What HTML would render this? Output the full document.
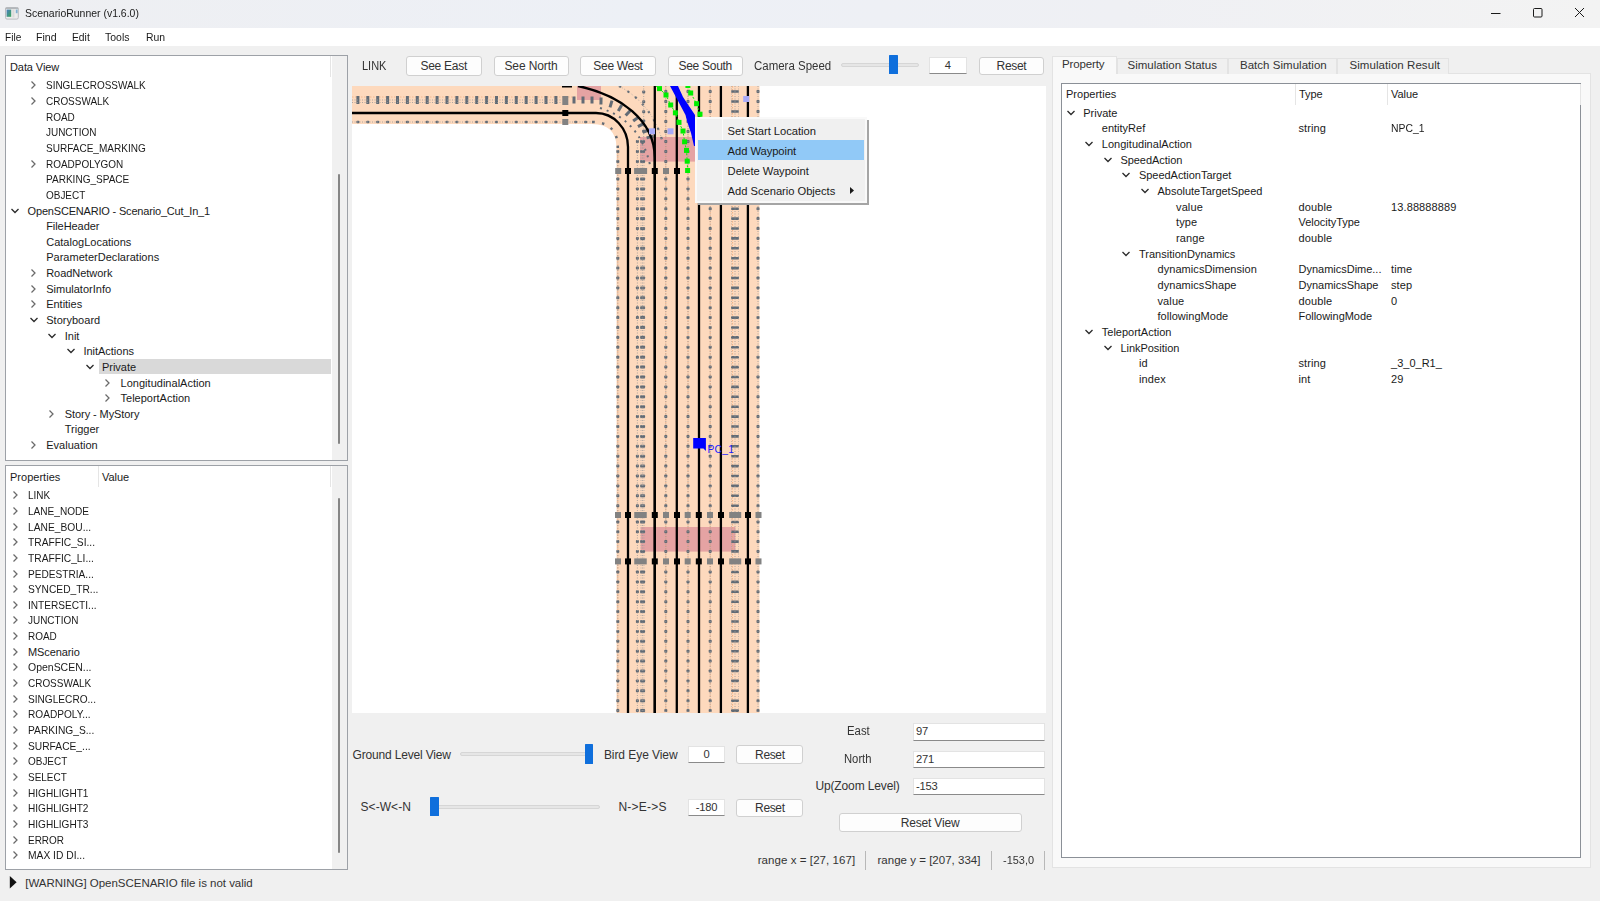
<!DOCTYPE html><html><head><meta charset="utf-8"><style>
html,body{margin:0;padding:0}
body{width:1600px;height:901px;position:relative;overflow:hidden;background:#f0f0f0;font-family:"Liberation Sans",sans-serif;}
.t{position:absolute;white-space:nowrap;line-height:14px;height:14px}
.a{position:absolute}
.b{position:absolute;box-sizing:border-box}
.btn{position:absolute;box-sizing:border-box;background:#fdfdfd;border:1px solid #d0d0d0;border-radius:3px;text-align:center;color:#333;white-space:nowrap}
.inp{position:absolute;box-sizing:border-box;background:#fff;border:1px solid #e3e3e3;border-bottom:1px solid #8a8a8a;color:#333;white-space:nowrap}
</style></head><body>
<div class="b" style="left:0px;top:0px;width:1600px;height:28px;background:linear-gradient(90deg,#eeeff2 0%,#edf0f6 40%,#eff0f4 70%,#f3f3f3 100%)"></div>
<svg class="a" style="left:5px;top:6.5px" width="14" height="13" viewBox="0 0 14 13"><defs><linearGradient id="ig" x1="0" y1="0" x2="1" y2="1"><stop offset="0" stop-color="#4a7fc0"/><stop offset="1" stop-color="#3aa65a"/></linearGradient></defs><rect x="0.5" y="0.5" width="12.8" height="11.6" rx="1.5" fill="#ececec" stroke="#b9bcc0"/><rect x="0.5" y="0.5" width="12.8" height="1.6" fill="#b2b6ba"/><rect x="1.6" y="2.6" width="4.6" height="7.2" fill="url(#ig)"/><rect x="7.4" y="2.6" width="2" height="7.8" fill="#dadada"/><rect x="10.8" y="2.6" width="1.8" height="3.6" fill="#7fb0d0"/></svg>
<div class="t" style="left:25px;top:6.00px;font-size:11.2px;color:#1a1a1a;transform:scaleX(0.9343);transform-origin:0 50%;">ScenarioRunner (v1.6.0)</div>
<svg class="a" style="left:1480px;top:0px" width="120" height="28" viewBox="1480 0 120 28"><path d="M1491 13.5 H1500.5" stroke="#1a1a1a" stroke-width="1"/><rect x="1533.5" y="8.5" width="8.5" height="8.5" rx="1" fill="none" stroke="#1a1a1a" stroke-width="1"/><path d="M1575 8 L1584 17 M1584 8 L1575 17" stroke="#1a1a1a" stroke-width="1"/></svg>
<div class="b" style="left:0px;top:28px;width:1600px;height:18px;background:#ffffff"></div>
<div class="t" style="left:5px;top:30.00px;font-size:11.5px;color:#1a1a1a;transform:scaleX(0.8769);transform-origin:0 50%;">File</div>
<div class="t" style="left:36.25px;top:30.00px;font-size:11.5px;color:#1a1a1a;transform:scaleX(0.9208);transform-origin:0 50%;">Find</div>
<div class="t" style="left:72.25px;top:30.00px;font-size:11.5px;color:#1a1a1a;transform:scaleX(0.8957);transform-origin:0 50%;">Edit</div>
<div class="t" style="left:105px;top:30.00px;font-size:11.5px;color:#1a1a1a;transform:scaleX(0.9103);transform-origin:0 50%;">Tools</div>
<div class="t" style="left:145.6px;top:30.00px;font-size:11.5px;color:#1a1a1a;transform:scaleX(0.9054);transform-origin:0 50%;">Run</div>
<div class="b" style="left:5px;top:55px;width:343px;height:406px;background:#fff;border:1px solid #9da1a7"></div>
<div class="b" style="left:332px;top:56px;width:15px;height:404px;background:#f0f0f0"></div>
<div class="b" style="left:330px;top:56px;width:1px;height:21px;background:#e5e5e5"></div>
<div class="b" style="left:338px;top:174px;width:2px;height:270px;background:#858585;border-radius:1px"></div>
<div class="t" style="left:10px;top:59.50px;font-size:11px;color:#1a1a1a;letter-spacing:-0.084px;">Data View</div>
<div class="b" style="left:98.5px;top:359.09999999999997px;width:232.5px;height:15.2px;background:#d9d9d9"></div>
<svg class="a" style="left:28.700000000000003px;top:80.38px" width="8" height="10" viewBox="0 0 8 10"><path d="M2.5 1.5 L6 5 L2.5 8.5" fill="none" stroke="#6a6a6a" stroke-width="1.25"/></svg>
<div class="t" style="left:46.2px;top:78.38px;font-size:11px;color:#1a1a1a;transform:scaleX(0.9050);transform-origin:0 50%;">SINGLECROSSWALK</div>
<svg class="a" style="left:28.700000000000003px;top:96.02px" width="8" height="10" viewBox="0 0 8 10"><path d="M2.5 1.5 L6 5 L2.5 8.5" fill="none" stroke="#6a6a6a" stroke-width="1.25"/></svg>
<div class="t" style="left:46.2px;top:94.02px;font-size:11px;color:#1a1a1a;transform:scaleX(0.9050);transform-origin:0 50%;">CROSSWALK</div>
<div class="t" style="left:46.2px;top:109.66px;font-size:11px;color:#1a1a1a;transform:scaleX(0.9050);transform-origin:0 50%;">ROAD</div>
<div class="t" style="left:46.2px;top:125.30px;font-size:11px;color:#1a1a1a;transform:scaleX(0.9050);transform-origin:0 50%;">JUNCTION</div>
<div class="t" style="left:46.2px;top:140.94px;font-size:11px;color:#1a1a1a;transform:scaleX(0.9114);transform-origin:0 50%;">SURFACE_MARKING</div>
<svg class="a" style="left:28.700000000000003px;top:158.57999999999998px" width="8" height="10" viewBox="0 0 8 10"><path d="M2.5 1.5 L6 5 L2.5 8.5" fill="none" stroke="#6a6a6a" stroke-width="1.25"/></svg>
<div class="t" style="left:46.2px;top:156.58px;font-size:11px;color:#1a1a1a;transform:scaleX(0.9050);transform-origin:0 50%;">ROADPOLYGON</div>
<div class="t" style="left:46.2px;top:172.22px;font-size:11px;color:#1a1a1a;transform:scaleX(0.9126);transform-origin:0 50%;">PARKING_SPACE</div>
<div class="t" style="left:46.2px;top:187.86px;font-size:11px;color:#1a1a1a;transform:scaleX(0.9050);transform-origin:0 50%;">OBJECT</div>
<svg class="a" style="left:10.100000000000001px;top:206.5px" width="10" height="8" viewBox="0 0 10 8"><path d="M1.5 2 L5 5.5 L8.5 2" fill="none" stroke="#2a2a2a" stroke-width="1.3"/></svg>
<div class="t" style="left:27.6px;top:203.50px;font-size:11px;color:#1a1a1a;letter-spacing:-0.185px;">OpenSCENARIO - Scenario_Cut_In_1</div>
<div class="t" style="left:46.2px;top:219.14px;font-size:11px;color:#1a1a1a;letter-spacing:-0.061px;">FileHeader</div>
<div class="t" style="left:46.2px;top:234.78px;font-size:11px;color:#1a1a1a;letter-spacing:0.005px;">CatalogLocations</div>
<div class="t" style="left:46.2px;top:250.42px;font-size:11px;color:#1a1a1a;letter-spacing:0.023px;">ParameterDeclarations</div>
<svg class="a" style="left:28.700000000000003px;top:268.06px" width="8" height="10" viewBox="0 0 8 10"><path d="M2.5 1.5 L6 5 L2.5 8.5" fill="none" stroke="#6a6a6a" stroke-width="1.25"/></svg>
<div class="t" style="left:46.2px;top:266.06px;font-size:11px;color:#1a1a1a;letter-spacing:-0.045px;">RoadNetwork</div>
<svg class="a" style="left:28.700000000000003px;top:283.7px" width="8" height="10" viewBox="0 0 8 10"><path d="M2.5 1.5 L6 5 L2.5 8.5" fill="none" stroke="#6a6a6a" stroke-width="1.25"/></svg>
<div class="t" style="left:46.2px;top:281.70px;font-size:11px;color:#1a1a1a;letter-spacing:0.008px;">SimulatorInfo</div>
<svg class="a" style="left:28.700000000000003px;top:299.34000000000003px" width="8" height="10" viewBox="0 0 8 10"><path d="M2.5 1.5 L6 5 L2.5 8.5" fill="none" stroke="#6a6a6a" stroke-width="1.25"/></svg>
<div class="t" style="left:46.2px;top:297.34px;font-size:11px;color:#1a1a1a;letter-spacing:-0.015px;">Entities</div>
<svg class="a" style="left:28.700000000000003px;top:315.98px" width="10" height="8" viewBox="0 0 10 8"><path d="M1.5 2 L5 5.5 L8.5 2" fill="none" stroke="#2a2a2a" stroke-width="1.3"/></svg>
<div class="t" style="left:46.2px;top:312.98px;font-size:11px;color:#1a1a1a;letter-spacing:0.023px;">Storyboard</div>
<svg class="a" style="left:47.30000000000001px;top:331.62px" width="10" height="8" viewBox="0 0 10 8"><path d="M1.5 2 L5 5.5 L8.5 2" fill="none" stroke="#2a2a2a" stroke-width="1.3"/></svg>
<div class="t" style="left:64.80000000000001px;top:328.62px;font-size:11px;color:#1a1a1a;letter-spacing:-0.014px;">Init</div>
<svg class="a" style="left:65.9px;top:347.26px" width="10" height="8" viewBox="0 0 10 8"><path d="M1.5 2 L5 5.5 L8.5 2" fill="none" stroke="#2a2a2a" stroke-width="1.3"/></svg>
<div class="t" style="left:83.4px;top:344.26px;font-size:11px;color:#1a1a1a;letter-spacing:-0.016px;">InitActions</div>
<svg class="a" style="left:84.5px;top:362.9px" width="10" height="8" viewBox="0 0 10 8"><path d="M1.5 2 L5 5.5 L8.5 2" fill="none" stroke="#2a2a2a" stroke-width="1.3"/></svg>
<div class="t" style="left:102.0px;top:359.90px;font-size:11px;color:#1a1a1a;letter-spacing:-0.023px;">Private</div>
<svg class="a" style="left:103.1px;top:377.54px" width="8" height="10" viewBox="0 0 8 10"><path d="M2.5 1.5 L6 5 L2.5 8.5" fill="none" stroke="#6a6a6a" stroke-width="1.25"/></svg>
<div class="t" style="left:120.6px;top:375.54px;font-size:11px;color:#1a1a1a;letter-spacing:0.014px;">LongitudinalAction</div>
<svg class="a" style="left:103.1px;top:393.18px" width="8" height="10" viewBox="0 0 8 10"><path d="M2.5 1.5 L6 5 L2.5 8.5" fill="none" stroke="#6a6a6a" stroke-width="1.25"/></svg>
<div class="t" style="left:120.6px;top:391.18px;font-size:11px;color:#1a1a1a;letter-spacing:-0.014px;">TeleportAction</div>
<svg class="a" style="left:47.30000000000001px;top:408.82px" width="8" height="10" viewBox="0 0 8 10"><path d="M2.5 1.5 L6 5 L2.5 8.5" fill="none" stroke="#6a6a6a" stroke-width="1.25"/></svg>
<div class="t" style="left:64.80000000000001px;top:406.82px;font-size:11px;color:#1a1a1a;letter-spacing:-0.082px;">Story - MyStory</div>
<div class="t" style="left:64.80000000000001px;top:422.46px;font-size:11px;color:#1a1a1a;letter-spacing:-0.011px;">Trigger</div>
<svg class="a" style="left:28.700000000000003px;top:440.1px" width="8" height="10" viewBox="0 0 8 10"><path d="M2.5 1.5 L6 5 L2.5 8.5" fill="none" stroke="#6a6a6a" stroke-width="1.25"/></svg>
<div class="t" style="left:46.2px;top:438.10px;font-size:11px;color:#1a1a1a;letter-spacing:0.018px;">Evaluation</div>
<div class="b" style="left:5px;top:465px;width:343px;height:405px;background:#fff;border:1px solid #9da1a7"></div>
<div class="b" style="left:332px;top:466px;width:15px;height:403px;background:#f0f0f0"></div>
<div class="b" style="left:98px;top:466px;width:1px;height:21px;background:#e5e5e5"></div>
<div class="b" style="left:330px;top:466px;width:1px;height:21px;background:#e5e5e5"></div>
<div class="b" style="left:338px;top:498px;width:2px;height:355px;background:#858585;border-radius:1px"></div>
<div class="t" style="left:10px;top:470.00px;font-size:11px;color:#1a1a1a;letter-spacing:0.016px;">Properties</div>
<div class="t" style="left:102px;top:470.00px;font-size:11px;color:#1a1a1a;letter-spacing:-0.056px;">Value</div>
<svg class="a" style="left:10.5px;top:490.2px" width="8" height="10" viewBox="0 0 8 10"><path d="M2.5 1.5 L6 5 L2.5 8.5" fill="none" stroke="#6a6a6a" stroke-width="1.25"/></svg>
<div class="t" style="left:28px;top:488.20px;font-size:11px;color:#1a1a1a;transform:scaleX(0.9050);transform-origin:0 50%;">LINK</div>
<svg class="a" style="left:10.5px;top:505.86px" width="8" height="10" viewBox="0 0 8 10"><path d="M2.5 1.5 L6 5 L2.5 8.5" fill="none" stroke="#6a6a6a" stroke-width="1.25"/></svg>
<div class="t" style="left:28px;top:503.86px;font-size:11px;color:#1a1a1a;transform:scaleX(0.9156);transform-origin:0 50%;">LANE_NODE</div>
<svg class="a" style="left:10.5px;top:521.52px" width="8" height="10" viewBox="0 0 8 10"><path d="M2.5 1.5 L6 5 L2.5 8.5" fill="none" stroke="#6a6a6a" stroke-width="1.25"/></svg>
<div class="t" style="left:28px;top:519.52px;font-size:11px;color:#1a1a1a;transform:scaleX(0.9309);transform-origin:0 50%;">LANE_BOU...</div>
<svg class="a" style="left:10.5px;top:537.18px" width="8" height="10" viewBox="0 0 8 10"><path d="M2.5 1.5 L6 5 L2.5 8.5" fill="none" stroke="#6a6a6a" stroke-width="1.25"/></svg>
<div class="t" style="left:28px;top:535.18px;font-size:11px;color:#1a1a1a;transform:scaleX(0.9294);transform-origin:0 50%;">TRAFFIC_SI...</div>
<svg class="a" style="left:10.5px;top:552.84px" width="8" height="10" viewBox="0 0 8 10"><path d="M2.5 1.5 L6 5 L2.5 8.5" fill="none" stroke="#6a6a6a" stroke-width="1.25"/></svg>
<div class="t" style="left:28px;top:550.84px;font-size:11px;color:#1a1a1a;transform:scaleX(0.9298);transform-origin:0 50%;">TRAFFIC_LI...</div>
<svg class="a" style="left:10.5px;top:568.5px" width="8" height="10" viewBox="0 0 8 10"><path d="M2.5 1.5 L6 5 L2.5 8.5" fill="none" stroke="#6a6a6a" stroke-width="1.25"/></svg>
<div class="t" style="left:28px;top:566.50px;font-size:11px;color:#1a1a1a;transform:scaleX(0.9197);transform-origin:0 50%;">PEDESTRIA...</div>
<svg class="a" style="left:10.5px;top:584.16px" width="8" height="10" viewBox="0 0 8 10"><path d="M2.5 1.5 L6 5 L2.5 8.5" fill="none" stroke="#6a6a6a" stroke-width="1.25"/></svg>
<div class="t" style="left:28px;top:582.16px;font-size:11px;color:#1a1a1a;transform:scaleX(0.9282);transform-origin:0 50%;">SYNCED_TR...</div>
<svg class="a" style="left:10.5px;top:599.8199999999999px" width="8" height="10" viewBox="0 0 8 10"><path d="M2.5 1.5 L6 5 L2.5 8.5" fill="none" stroke="#6a6a6a" stroke-width="1.25"/></svg>
<div class="t" style="left:28px;top:597.82px;font-size:11px;color:#1a1a1a;transform:scaleX(0.9191);transform-origin:0 50%;">INTERSECTI...</div>
<svg class="a" style="left:10.5px;top:615.48px" width="8" height="10" viewBox="0 0 8 10"><path d="M2.5 1.5 L6 5 L2.5 8.5" fill="none" stroke="#6a6a6a" stroke-width="1.25"/></svg>
<div class="t" style="left:28px;top:613.48px;font-size:11px;color:#1a1a1a;transform:scaleX(0.9050);transform-origin:0 50%;">JUNCTION</div>
<svg class="a" style="left:10.5px;top:631.14px" width="8" height="10" viewBox="0 0 8 10"><path d="M2.5 1.5 L6 5 L2.5 8.5" fill="none" stroke="#6a6a6a" stroke-width="1.25"/></svg>
<div class="t" style="left:28px;top:629.14px;font-size:11px;color:#1a1a1a;transform:scaleX(0.9050);transform-origin:0 50%;">ROAD</div>
<svg class="a" style="left:10.5px;top:646.8px" width="8" height="10" viewBox="0 0 8 10"><path d="M2.5 1.5 L6 5 L2.5 8.5" fill="none" stroke="#6a6a6a" stroke-width="1.25"/></svg>
<div class="t" style="left:28px;top:644.80px;font-size:11px;color:#1a1a1a;letter-spacing:-0.094px;">MScenario</div>
<svg class="a" style="left:10.5px;top:662.46px" width="8" height="10" viewBox="0 0 8 10"><path d="M2.5 1.5 L6 5 L2.5 8.5" fill="none" stroke="#6a6a6a" stroke-width="1.25"/></svg>
<div class="t" style="left:28px;top:660.46px;font-size:11px;color:#1a1a1a;transform:scaleX(0.9525);transform-origin:0 50%;">OpenSCEN...</div>
<svg class="a" style="left:10.5px;top:678.12px" width="8" height="10" viewBox="0 0 8 10"><path d="M2.5 1.5 L6 5 L2.5 8.5" fill="none" stroke="#6a6a6a" stroke-width="1.25"/></svg>
<div class="t" style="left:28px;top:676.12px;font-size:11px;color:#1a1a1a;transform:scaleX(0.9050);transform-origin:0 50%;">CROSSWALK</div>
<svg class="a" style="left:10.5px;top:693.78px" width="8" height="10" viewBox="0 0 8 10"><path d="M2.5 1.5 L6 5 L2.5 8.5" fill="none" stroke="#6a6a6a" stroke-width="1.25"/></svg>
<div class="t" style="left:28px;top:691.78px;font-size:11px;color:#1a1a1a;transform:scaleX(0.9193);transform-origin:0 50%;">SINGLECRO...</div>
<svg class="a" style="left:10.5px;top:709.44px" width="8" height="10" viewBox="0 0 8 10"><path d="M2.5 1.5 L6 5 L2.5 8.5" fill="none" stroke="#6a6a6a" stroke-width="1.25"/></svg>
<div class="t" style="left:28px;top:707.44px;font-size:11px;color:#1a1a1a;transform:scaleX(0.9200);transform-origin:0 50%;">ROADPOLY...</div>
<svg class="a" style="left:10.5px;top:725.1px" width="8" height="10" viewBox="0 0 8 10"><path d="M2.5 1.5 L6 5 L2.5 8.5" fill="none" stroke="#6a6a6a" stroke-width="1.25"/></svg>
<div class="t" style="left:28px;top:723.10px;font-size:11px;color:#1a1a1a;transform:scaleX(0.9294);transform-origin:0 50%;">PARKING_S...</div>
<svg class="a" style="left:10.5px;top:740.76px" width="8" height="10" viewBox="0 0 8 10"><path d="M2.5 1.5 L6 5 L2.5 8.5" fill="none" stroke="#6a6a6a" stroke-width="1.25"/></svg>
<div class="t" style="left:28px;top:738.76px;font-size:11px;color:#1a1a1a;transform:scaleX(0.9309);transform-origin:0 50%;">SURFACE_...</div>
<svg class="a" style="left:10.5px;top:756.4200000000001px" width="8" height="10" viewBox="0 0 8 10"><path d="M2.5 1.5 L6 5 L2.5 8.5" fill="none" stroke="#6a6a6a" stroke-width="1.25"/></svg>
<div class="t" style="left:28px;top:754.42px;font-size:11px;color:#1a1a1a;transform:scaleX(0.9050);transform-origin:0 50%;">OBJECT</div>
<svg class="a" style="left:10.5px;top:772.0799999999999px" width="8" height="10" viewBox="0 0 8 10"><path d="M2.5 1.5 L6 5 L2.5 8.5" fill="none" stroke="#6a6a6a" stroke-width="1.25"/></svg>
<div class="t" style="left:28px;top:770.08px;font-size:11px;color:#1a1a1a;transform:scaleX(0.9050);transform-origin:0 50%;">SELECT</div>
<svg class="a" style="left:10.5px;top:787.74px" width="8" height="10" viewBox="0 0 8 10"><path d="M2.5 1.5 L6 5 L2.5 8.5" fill="none" stroke="#6a6a6a" stroke-width="1.25"/></svg>
<div class="t" style="left:28px;top:785.74px;font-size:11px;color:#1a1a1a;transform:scaleX(0.9157);transform-origin:0 50%;">HIGHLIGHT1</div>
<svg class="a" style="left:10.5px;top:803.4px" width="8" height="10" viewBox="0 0 8 10"><path d="M2.5 1.5 L6 5 L2.5 8.5" fill="none" stroke="#6a6a6a" stroke-width="1.25"/></svg>
<div class="t" style="left:28px;top:801.40px;font-size:11px;color:#1a1a1a;transform:scaleX(0.9157);transform-origin:0 50%;">HIGHLIGHT2</div>
<svg class="a" style="left:10.5px;top:819.06px" width="8" height="10" viewBox="0 0 8 10"><path d="M2.5 1.5 L6 5 L2.5 8.5" fill="none" stroke="#6a6a6a" stroke-width="1.25"/></svg>
<div class="t" style="left:28px;top:817.06px;font-size:11px;color:#1a1a1a;transform:scaleX(0.9157);transform-origin:0 50%;">HIGHLIGHT3</div>
<svg class="a" style="left:10.5px;top:834.72px" width="8" height="10" viewBox="0 0 8 10"><path d="M2.5 1.5 L6 5 L2.5 8.5" fill="none" stroke="#6a6a6a" stroke-width="1.25"/></svg>
<div class="t" style="left:28px;top:832.72px;font-size:11px;color:#1a1a1a;transform:scaleX(0.9050);transform-origin:0 50%;">ERROR</div>
<svg class="a" style="left:10.5px;top:850.38px" width="8" height="10" viewBox="0 0 8 10"><path d="M2.5 1.5 L6 5 L2.5 8.5" fill="none" stroke="#6a6a6a" stroke-width="1.25"/></svg>
<div class="t" style="left:28px;top:848.38px;font-size:11px;color:#1a1a1a;transform:scaleX(0.9338);transform-origin:0 50%;">MAX ID DI...</div>
<svg class="a" style="left:9px;top:875.5px" width="10" height="13" viewBox="0 0 10 13"><path d="M0.8 0 L7.6 6.3 L0.8 12.6 Z" fill="#111"/></svg>
<div class="t" style="left:25.3px;top:876.00px;font-size:11.5px;color:#333;letter-spacing:-0.025px;">[WARNING] OpenSCENARIO file is not valid</div>
<div class="t" style="left:361.5px;top:58.50px;font-size:12px;color:#333;transform:scaleX(0.9146);transform-origin:0 50%;">LINK</div>
<div class="btn" style="left:406px;top:56px;width:75.5px;height:19.5px;font-size:12px;line-height:18.7px;letter-spacing:-0.250px;">See East</div>
<div class="btn" style="left:493.5px;top:56px;width:75.0px;height:19.5px;font-size:12px;line-height:18.7px;letter-spacing:-0.114px;">See North</div>
<div class="btn" style="left:580px;top:56px;width:76px;height:19.5px;font-size:12px;line-height:18.7px;letter-spacing:-0.315px;">See West</div>
<div class="btn" style="left:667.5px;top:56px;width:75.5px;height:19.5px;font-size:12px;line-height:18.7px;letter-spacing:-0.283px;">See South</div>
<div class="t" style="left:753.6px;top:58.50px;font-size:12px;color:#333;transform:scaleX(0.9565);transform-origin:0 50%;">Camera Speed</div>
<div class="b" style="left:841px;top:62.5px;width:77.5px;height:4px;background:#e6e6e6;border:1px solid #d6d6d6;border-radius:2px"></div>
<div class="b" style="left:889px;top:55.3px;width:8.6px;height:19px;background:#0f6fdc;border-radius:0.5px"></div>
<div class="inp" style="left:929px;top:57.2px;width:37.700000000000045px;height:17.200000000000003px;font-size:11.2px;line-height:14.200000000000003px;text-align:center;letter-spacing:-0.2px;">4</div>
<div class="btn" style="left:978.5px;top:56.7px;width:65.79999999999995px;height:18.5px;font-size:12px;line-height:17.7px;letter-spacing:-0.350px;">Reset</div>
<div class="b" style="left:352px;top:86px;width:694px;height:627px;background:#ffffff"></div>
<svg style="position:absolute;left:352px;top:86px" width="694" height="627" viewBox="352 86 694 627">
<defs><clipPath id="mc"><rect x="352" y="86" width="694" height="627"/></clipPath></defs><g clip-path="url(#mc)">
<path d="M352 86 H759.5 V713 H616.5 V148 Q616.5 124 592 124 H352 Z" fill="#fdd9bd"/>
<rect x="577" y="86" width="24" height="14" fill="#e5a3a3"/>
<rect x="640" y="137" width="55" height="24.6" fill="#e5a3a3"/>
<rect x="640.6" y="527" width="94.8" height="24.6" fill="#e5a3a3"/>
<line x1="617.8" y1="150" x2="617.8" y2="713" stroke="#e8a070" stroke-width="0.8" stroke-dasharray="1.5 1.5" opacity="0.9"/>
<line x1="665.8" y1="86" x2="665.8" y2="713" stroke="#e8a070" stroke-width="0.8" stroke-dasharray="1.5 1.5" opacity="0.9"/>
<line x1="688" y1="86" x2="688" y2="713" stroke="#e8a070" stroke-width="0.8" stroke-dasharray="1.5 1.5" opacity="0.9"/>
<line x1="710.2" y1="86" x2="710.2" y2="713" stroke="#e8a070" stroke-width="0.8" stroke-dasharray="1.5 1.5" opacity="0.9"/>
<line x1="732.4" y1="86" x2="732.4" y2="713" stroke="#e8a070" stroke-width="0.8" stroke-dasharray="1.5 1.5" opacity="0.9"/>
<line x1="352" y1="97" x2="575" y2="97" stroke="#e8a070" stroke-width="0.7" stroke-dasharray="1.5 1.5" opacity="0.8"/>
<rect x="616.30" y="150.00" width="3" height="3" rx="0.8" fill="#626b75"/>
<rect x="616.30" y="160.00" width="3" height="3" rx="0.8" fill="#626b75"/>
<rect x="616.30" y="177.50" width="3" height="3" rx="0.8" fill="#626b75"/>
<rect x="616.30" y="187.40" width="3" height="3" rx="0.8" fill="#626b75"/>
<rect x="616.30" y="197.30" width="3" height="3" rx="0.8" fill="#626b75"/>
<rect x="616.30" y="207.20" width="3" height="3" rx="0.8" fill="#626b75"/>
<rect x="616.30" y="217.10" width="3" height="3" rx="0.8" fill="#626b75"/>
<rect x="616.30" y="227.00" width="3" height="3" rx="0.8" fill="#626b75"/>
<rect x="616.30" y="236.90" width="3" height="3" rx="0.8" fill="#626b75"/>
<rect x="616.30" y="246.80" width="3" height="3" rx="0.8" fill="#626b75"/>
<rect x="616.30" y="256.70" width="3" height="3" rx="0.8" fill="#626b75"/>
<rect x="616.30" y="266.60" width="3" height="3" rx="0.8" fill="#626b75"/>
<rect x="616.30" y="276.50" width="3" height="3" rx="0.8" fill="#626b75"/>
<rect x="616.30" y="286.40" width="3" height="3" rx="0.8" fill="#626b75"/>
<rect x="616.30" y="296.30" width="3" height="3" rx="0.8" fill="#626b75"/>
<rect x="616.30" y="306.20" width="3" height="3" rx="0.8" fill="#626b75"/>
<rect x="616.30" y="316.10" width="3" height="3" rx="0.8" fill="#626b75"/>
<rect x="616.30" y="326.00" width="3" height="3" rx="0.8" fill="#626b75"/>
<rect x="616.30" y="335.90" width="3" height="3" rx="0.8" fill="#626b75"/>
<rect x="616.30" y="345.80" width="3" height="3" rx="0.8" fill="#626b75"/>
<rect x="616.30" y="355.70" width="3" height="3" rx="0.8" fill="#626b75"/>
<rect x="616.30" y="365.60" width="3" height="3" rx="0.8" fill="#626b75"/>
<rect x="616.30" y="375.50" width="3" height="3" rx="0.8" fill="#626b75"/>
<rect x="616.30" y="385.40" width="3" height="3" rx="0.8" fill="#626b75"/>
<rect x="616.30" y="395.30" width="3" height="3" rx="0.8" fill="#626b75"/>
<rect x="616.30" y="405.20" width="3" height="3" rx="0.8" fill="#626b75"/>
<rect x="616.30" y="415.10" width="3" height="3" rx="0.8" fill="#626b75"/>
<rect x="616.30" y="425.00" width="3" height="3" rx="0.8" fill="#626b75"/>
<rect x="616.30" y="434.90" width="3" height="3" rx="0.8" fill="#626b75"/>
<rect x="616.30" y="444.80" width="3" height="3" rx="0.8" fill="#626b75"/>
<rect x="616.30" y="454.70" width="3" height="3" rx="0.8" fill="#626b75"/>
<rect x="616.30" y="464.60" width="3" height="3" rx="0.8" fill="#626b75"/>
<rect x="616.30" y="474.50" width="3" height="3" rx="0.8" fill="#626b75"/>
<rect x="616.30" y="484.40" width="3" height="3" rx="0.8" fill="#626b75"/>
<rect x="616.30" y="494.30" width="3" height="3" rx="0.8" fill="#626b75"/>
<rect x="616.30" y="504.20" width="3" height="3" rx="0.8" fill="#626b75"/>
<rect x="616.30" y="520.50" width="3" height="3" rx="0.8" fill="#626b75"/>
<rect x="616.30" y="530.30" width="3" height="3" rx="0.8" fill="#626b75"/>
<rect x="616.30" y="540.10" width="3" height="3" rx="0.8" fill="#626b75"/>
<rect x="616.30" y="549.90" width="3" height="3" rx="0.8" fill="#626b75"/>
<rect x="616.30" y="570.50" width="3" height="3" rx="0.8" fill="#626b75"/>
<rect x="616.30" y="580.40" width="3" height="3" rx="0.8" fill="#626b75"/>
<rect x="616.30" y="590.30" width="3" height="3" rx="0.8" fill="#626b75"/>
<rect x="616.30" y="600.20" width="3" height="3" rx="0.8" fill="#626b75"/>
<rect x="616.30" y="610.10" width="3" height="3" rx="0.8" fill="#626b75"/>
<rect x="616.30" y="620.00" width="3" height="3" rx="0.8" fill="#626b75"/>
<rect x="616.30" y="629.90" width="3" height="3" rx="0.8" fill="#626b75"/>
<rect x="616.30" y="639.80" width="3" height="3" rx="0.8" fill="#626b75"/>
<rect x="616.30" y="649.70" width="3" height="3" rx="0.8" fill="#626b75"/>
<rect x="616.30" y="659.60" width="3" height="3" rx="0.8" fill="#626b75"/>
<rect x="616.30" y="669.50" width="3" height="3" rx="0.8" fill="#626b75"/>
<rect x="616.30" y="679.40" width="3" height="3" rx="0.8" fill="#626b75"/>
<rect x="616.30" y="689.30" width="3" height="3" rx="0.8" fill="#626b75"/>
<rect x="616.30" y="699.20" width="3" height="3" rx="0.8" fill="#626b75"/>
<rect x="616.30" y="709.10" width="3" height="3" rx="0.8" fill="#626b75"/>
<line x1="617.8" y1="150" x2="617.8" y2="713" stroke="#9a9a9a" stroke-width="0.8" stroke-dasharray="1 1.5"/>
<rect x="664.30" y="90.00" width="3" height="3" rx="0.8" fill="#626b75"/>
<rect x="664.30" y="100.00" width="3" height="3" rx="0.8" fill="#626b75"/>
<rect x="664.30" y="110.00" width="3" height="3" rx="0.8" fill="#626b75"/>
<rect x="664.30" y="120.00" width="3" height="3" rx="0.8" fill="#626b75"/>
<rect x="664.30" y="130.00" width="3" height="3" rx="0.8" fill="#626b75"/>
<rect x="664.30" y="140.00" width="3" height="3" rx="0.8" fill="#626b75"/>
<rect x="664.30" y="150.00" width="3" height="3" rx="0.8" fill="#626b75"/>
<rect x="664.30" y="160.00" width="3" height="3" rx="0.8" fill="#626b75"/>
<rect x="664.30" y="177.50" width="3" height="3" rx="0.8" fill="#626b75"/>
<rect x="664.30" y="187.40" width="3" height="3" rx="0.8" fill="#626b75"/>
<rect x="664.30" y="197.30" width="3" height="3" rx="0.8" fill="#626b75"/>
<rect x="664.30" y="207.20" width="3" height="3" rx="0.8" fill="#626b75"/>
<rect x="664.30" y="217.10" width="3" height="3" rx="0.8" fill="#626b75"/>
<rect x="664.30" y="227.00" width="3" height="3" rx="0.8" fill="#626b75"/>
<rect x="664.30" y="236.90" width="3" height="3" rx="0.8" fill="#626b75"/>
<rect x="664.30" y="246.80" width="3" height="3" rx="0.8" fill="#626b75"/>
<rect x="664.30" y="256.70" width="3" height="3" rx="0.8" fill="#626b75"/>
<rect x="664.30" y="266.60" width="3" height="3" rx="0.8" fill="#626b75"/>
<rect x="664.30" y="276.50" width="3" height="3" rx="0.8" fill="#626b75"/>
<rect x="664.30" y="286.40" width="3" height="3" rx="0.8" fill="#626b75"/>
<rect x="664.30" y="296.30" width="3" height="3" rx="0.8" fill="#626b75"/>
<rect x="664.30" y="306.20" width="3" height="3" rx="0.8" fill="#626b75"/>
<rect x="664.30" y="316.10" width="3" height="3" rx="0.8" fill="#626b75"/>
<rect x="664.30" y="326.00" width="3" height="3" rx="0.8" fill="#626b75"/>
<rect x="664.30" y="335.90" width="3" height="3" rx="0.8" fill="#626b75"/>
<rect x="664.30" y="345.80" width="3" height="3" rx="0.8" fill="#626b75"/>
<rect x="664.30" y="355.70" width="3" height="3" rx="0.8" fill="#626b75"/>
<rect x="664.30" y="365.60" width="3" height="3" rx="0.8" fill="#626b75"/>
<rect x="664.30" y="375.50" width="3" height="3" rx="0.8" fill="#626b75"/>
<rect x="664.30" y="385.40" width="3" height="3" rx="0.8" fill="#626b75"/>
<rect x="664.30" y="395.30" width="3" height="3" rx="0.8" fill="#626b75"/>
<rect x="664.30" y="405.20" width="3" height="3" rx="0.8" fill="#626b75"/>
<rect x="664.30" y="415.10" width="3" height="3" rx="0.8" fill="#626b75"/>
<rect x="664.30" y="425.00" width="3" height="3" rx="0.8" fill="#626b75"/>
<rect x="664.30" y="434.90" width="3" height="3" rx="0.8" fill="#626b75"/>
<rect x="664.30" y="444.80" width="3" height="3" rx="0.8" fill="#626b75"/>
<rect x="664.30" y="454.70" width="3" height="3" rx="0.8" fill="#626b75"/>
<rect x="664.30" y="464.60" width="3" height="3" rx="0.8" fill="#626b75"/>
<rect x="664.30" y="474.50" width="3" height="3" rx="0.8" fill="#626b75"/>
<rect x="664.30" y="484.40" width="3" height="3" rx="0.8" fill="#626b75"/>
<rect x="664.30" y="494.30" width="3" height="3" rx="0.8" fill="#626b75"/>
<rect x="664.30" y="504.20" width="3" height="3" rx="0.8" fill="#626b75"/>
<rect x="664.30" y="520.50" width="3" height="3" rx="0.8" fill="#626b75"/>
<rect x="664.30" y="530.30" width="3" height="3" rx="0.8" fill="#626b75"/>
<rect x="664.30" y="540.10" width="3" height="3" rx="0.8" fill="#626b75"/>
<rect x="664.30" y="549.90" width="3" height="3" rx="0.8" fill="#626b75"/>
<rect x="664.30" y="570.50" width="3" height="3" rx="0.8" fill="#626b75"/>
<rect x="664.30" y="580.40" width="3" height="3" rx="0.8" fill="#626b75"/>
<rect x="664.30" y="590.30" width="3" height="3" rx="0.8" fill="#626b75"/>
<rect x="664.30" y="600.20" width="3" height="3" rx="0.8" fill="#626b75"/>
<rect x="664.30" y="610.10" width="3" height="3" rx="0.8" fill="#626b75"/>
<rect x="664.30" y="620.00" width="3" height="3" rx="0.8" fill="#626b75"/>
<rect x="664.30" y="629.90" width="3" height="3" rx="0.8" fill="#626b75"/>
<rect x="664.30" y="639.80" width="3" height="3" rx="0.8" fill="#626b75"/>
<rect x="664.30" y="649.70" width="3" height="3" rx="0.8" fill="#626b75"/>
<rect x="664.30" y="659.60" width="3" height="3" rx="0.8" fill="#626b75"/>
<rect x="664.30" y="669.50" width="3" height="3" rx="0.8" fill="#626b75"/>
<rect x="664.30" y="679.40" width="3" height="3" rx="0.8" fill="#626b75"/>
<rect x="664.30" y="689.30" width="3" height="3" rx="0.8" fill="#626b75"/>
<rect x="664.30" y="699.20" width="3" height="3" rx="0.8" fill="#626b75"/>
<rect x="664.30" y="709.10" width="3" height="3" rx="0.8" fill="#626b75"/>
<line x1="665.8" y1="86" x2="665.8" y2="713" stroke="#9a9a9a" stroke-width="0.8" stroke-dasharray="1 1.5"/>
<rect x="686.50" y="90.00" width="3" height="3" rx="0.8" fill="#626b75"/>
<rect x="686.50" y="100.00" width="3" height="3" rx="0.8" fill="#626b75"/>
<rect x="686.50" y="110.00" width="3" height="3" rx="0.8" fill="#626b75"/>
<rect x="686.50" y="120.00" width="3" height="3" rx="0.8" fill="#626b75"/>
<rect x="686.50" y="130.00" width="3" height="3" rx="0.8" fill="#626b75"/>
<rect x="686.50" y="140.00" width="3" height="3" rx="0.8" fill="#626b75"/>
<rect x="686.50" y="150.00" width="3" height="3" rx="0.8" fill="#626b75"/>
<rect x="686.50" y="160.00" width="3" height="3" rx="0.8" fill="#626b75"/>
<rect x="686.50" y="177.50" width="3" height="3" rx="0.8" fill="#626b75"/>
<rect x="686.50" y="187.40" width="3" height="3" rx="0.8" fill="#626b75"/>
<rect x="686.50" y="197.30" width="3" height="3" rx="0.8" fill="#626b75"/>
<rect x="686.50" y="207.20" width="3" height="3" rx="0.8" fill="#626b75"/>
<rect x="686.50" y="217.10" width="3" height="3" rx="0.8" fill="#626b75"/>
<rect x="686.50" y="227.00" width="3" height="3" rx="0.8" fill="#626b75"/>
<rect x="686.50" y="236.90" width="3" height="3" rx="0.8" fill="#626b75"/>
<rect x="686.50" y="246.80" width="3" height="3" rx="0.8" fill="#626b75"/>
<rect x="686.50" y="256.70" width="3" height="3" rx="0.8" fill="#626b75"/>
<rect x="686.50" y="266.60" width="3" height="3" rx="0.8" fill="#626b75"/>
<rect x="686.50" y="276.50" width="3" height="3" rx="0.8" fill="#626b75"/>
<rect x="686.50" y="286.40" width="3" height="3" rx="0.8" fill="#626b75"/>
<rect x="686.50" y="296.30" width="3" height="3" rx="0.8" fill="#626b75"/>
<rect x="686.50" y="306.20" width="3" height="3" rx="0.8" fill="#626b75"/>
<rect x="686.50" y="316.10" width="3" height="3" rx="0.8" fill="#626b75"/>
<rect x="686.50" y="326.00" width="3" height="3" rx="0.8" fill="#626b75"/>
<rect x="686.50" y="335.90" width="3" height="3" rx="0.8" fill="#626b75"/>
<rect x="686.50" y="345.80" width="3" height="3" rx="0.8" fill="#626b75"/>
<rect x="686.50" y="355.70" width="3" height="3" rx="0.8" fill="#626b75"/>
<rect x="686.50" y="365.60" width="3" height="3" rx="0.8" fill="#626b75"/>
<rect x="686.50" y="375.50" width="3" height="3" rx="0.8" fill="#626b75"/>
<rect x="686.50" y="385.40" width="3" height="3" rx="0.8" fill="#626b75"/>
<rect x="686.50" y="395.30" width="3" height="3" rx="0.8" fill="#626b75"/>
<rect x="686.50" y="405.20" width="3" height="3" rx="0.8" fill="#626b75"/>
<rect x="686.50" y="415.10" width="3" height="3" rx="0.8" fill="#626b75"/>
<rect x="686.50" y="425.00" width="3" height="3" rx="0.8" fill="#626b75"/>
<rect x="686.50" y="434.90" width="3" height="3" rx="0.8" fill="#626b75"/>
<rect x="686.50" y="444.80" width="3" height="3" rx="0.8" fill="#626b75"/>
<rect x="686.50" y="454.70" width="3" height="3" rx="0.8" fill="#626b75"/>
<rect x="686.50" y="464.60" width="3" height="3" rx="0.8" fill="#626b75"/>
<rect x="686.50" y="474.50" width="3" height="3" rx="0.8" fill="#626b75"/>
<rect x="686.50" y="484.40" width="3" height="3" rx="0.8" fill="#626b75"/>
<rect x="686.50" y="494.30" width="3" height="3" rx="0.8" fill="#626b75"/>
<rect x="686.50" y="504.20" width="3" height="3" rx="0.8" fill="#626b75"/>
<rect x="686.50" y="520.50" width="3" height="3" rx="0.8" fill="#626b75"/>
<rect x="686.50" y="530.30" width="3" height="3" rx="0.8" fill="#626b75"/>
<rect x="686.50" y="540.10" width="3" height="3" rx="0.8" fill="#626b75"/>
<rect x="686.50" y="549.90" width="3" height="3" rx="0.8" fill="#626b75"/>
<rect x="686.50" y="570.50" width="3" height="3" rx="0.8" fill="#626b75"/>
<rect x="686.50" y="580.40" width="3" height="3" rx="0.8" fill="#626b75"/>
<rect x="686.50" y="590.30" width="3" height="3" rx="0.8" fill="#626b75"/>
<rect x="686.50" y="600.20" width="3" height="3" rx="0.8" fill="#626b75"/>
<rect x="686.50" y="610.10" width="3" height="3" rx="0.8" fill="#626b75"/>
<rect x="686.50" y="620.00" width="3" height="3" rx="0.8" fill="#626b75"/>
<rect x="686.50" y="629.90" width="3" height="3" rx="0.8" fill="#626b75"/>
<rect x="686.50" y="639.80" width="3" height="3" rx="0.8" fill="#626b75"/>
<rect x="686.50" y="649.70" width="3" height="3" rx="0.8" fill="#626b75"/>
<rect x="686.50" y="659.60" width="3" height="3" rx="0.8" fill="#626b75"/>
<rect x="686.50" y="669.50" width="3" height="3" rx="0.8" fill="#626b75"/>
<rect x="686.50" y="679.40" width="3" height="3" rx="0.8" fill="#626b75"/>
<rect x="686.50" y="689.30" width="3" height="3" rx="0.8" fill="#626b75"/>
<rect x="686.50" y="699.20" width="3" height="3" rx="0.8" fill="#626b75"/>
<rect x="686.50" y="709.10" width="3" height="3" rx="0.8" fill="#626b75"/>
<line x1="688" y1="86" x2="688" y2="713" stroke="#9a9a9a" stroke-width="0.8" stroke-dasharray="1 1.5"/>
<rect x="708.70" y="90.00" width="3" height="3" rx="0.8" fill="#626b75"/>
<rect x="708.70" y="100.00" width="3" height="3" rx="0.8" fill="#626b75"/>
<rect x="708.70" y="110.00" width="3" height="3" rx="0.8" fill="#626b75"/>
<rect x="708.70" y="120.00" width="3" height="3" rx="0.8" fill="#626b75"/>
<rect x="708.70" y="130.00" width="3" height="3" rx="0.8" fill="#626b75"/>
<rect x="708.70" y="140.00" width="3" height="3" rx="0.8" fill="#626b75"/>
<rect x="708.70" y="150.00" width="3" height="3" rx="0.8" fill="#626b75"/>
<rect x="708.70" y="160.00" width="3" height="3" rx="0.8" fill="#626b75"/>
<rect x="708.70" y="177.50" width="3" height="3" rx="0.8" fill="#626b75"/>
<rect x="708.70" y="187.40" width="3" height="3" rx="0.8" fill="#626b75"/>
<rect x="708.70" y="197.30" width="3" height="3" rx="0.8" fill="#626b75"/>
<rect x="708.70" y="207.20" width="3" height="3" rx="0.8" fill="#626b75"/>
<rect x="708.70" y="217.10" width="3" height="3" rx="0.8" fill="#626b75"/>
<rect x="708.70" y="227.00" width="3" height="3" rx="0.8" fill="#626b75"/>
<rect x="708.70" y="236.90" width="3" height="3" rx="0.8" fill="#626b75"/>
<rect x="708.70" y="246.80" width="3" height="3" rx="0.8" fill="#626b75"/>
<rect x="708.70" y="256.70" width="3" height="3" rx="0.8" fill="#626b75"/>
<rect x="708.70" y="266.60" width="3" height="3" rx="0.8" fill="#626b75"/>
<rect x="708.70" y="276.50" width="3" height="3" rx="0.8" fill="#626b75"/>
<rect x="708.70" y="286.40" width="3" height="3" rx="0.8" fill="#626b75"/>
<rect x="708.70" y="296.30" width="3" height="3" rx="0.8" fill="#626b75"/>
<rect x="708.70" y="306.20" width="3" height="3" rx="0.8" fill="#626b75"/>
<rect x="708.70" y="316.10" width="3" height="3" rx="0.8" fill="#626b75"/>
<rect x="708.70" y="326.00" width="3" height="3" rx="0.8" fill="#626b75"/>
<rect x="708.70" y="335.90" width="3" height="3" rx="0.8" fill="#626b75"/>
<rect x="708.70" y="345.80" width="3" height="3" rx="0.8" fill="#626b75"/>
<rect x="708.70" y="355.70" width="3" height="3" rx="0.8" fill="#626b75"/>
<rect x="708.70" y="365.60" width="3" height="3" rx="0.8" fill="#626b75"/>
<rect x="708.70" y="375.50" width="3" height="3" rx="0.8" fill="#626b75"/>
<rect x="708.70" y="385.40" width="3" height="3" rx="0.8" fill="#626b75"/>
<rect x="708.70" y="395.30" width="3" height="3" rx="0.8" fill="#626b75"/>
<rect x="708.70" y="405.20" width="3" height="3" rx="0.8" fill="#626b75"/>
<rect x="708.70" y="415.10" width="3" height="3" rx="0.8" fill="#626b75"/>
<rect x="708.70" y="425.00" width="3" height="3" rx="0.8" fill="#626b75"/>
<rect x="708.70" y="434.90" width="3" height="3" rx="0.8" fill="#626b75"/>
<rect x="708.70" y="444.80" width="3" height="3" rx="0.8" fill="#626b75"/>
<rect x="708.70" y="454.70" width="3" height="3" rx="0.8" fill="#626b75"/>
<rect x="708.70" y="464.60" width="3" height="3" rx="0.8" fill="#626b75"/>
<rect x="708.70" y="474.50" width="3" height="3" rx="0.8" fill="#626b75"/>
<rect x="708.70" y="484.40" width="3" height="3" rx="0.8" fill="#626b75"/>
<rect x="708.70" y="494.30" width="3" height="3" rx="0.8" fill="#626b75"/>
<rect x="708.70" y="504.20" width="3" height="3" rx="0.8" fill="#626b75"/>
<rect x="708.70" y="520.50" width="3" height="3" rx="0.8" fill="#626b75"/>
<rect x="708.70" y="530.30" width="3" height="3" rx="0.8" fill="#626b75"/>
<rect x="708.70" y="540.10" width="3" height="3" rx="0.8" fill="#626b75"/>
<rect x="708.70" y="549.90" width="3" height="3" rx="0.8" fill="#626b75"/>
<rect x="708.70" y="570.50" width="3" height="3" rx="0.8" fill="#626b75"/>
<rect x="708.70" y="580.40" width="3" height="3" rx="0.8" fill="#626b75"/>
<rect x="708.70" y="590.30" width="3" height="3" rx="0.8" fill="#626b75"/>
<rect x="708.70" y="600.20" width="3" height="3" rx="0.8" fill="#626b75"/>
<rect x="708.70" y="610.10" width="3" height="3" rx="0.8" fill="#626b75"/>
<rect x="708.70" y="620.00" width="3" height="3" rx="0.8" fill="#626b75"/>
<rect x="708.70" y="629.90" width="3" height="3" rx="0.8" fill="#626b75"/>
<rect x="708.70" y="639.80" width="3" height="3" rx="0.8" fill="#626b75"/>
<rect x="708.70" y="649.70" width="3" height="3" rx="0.8" fill="#626b75"/>
<rect x="708.70" y="659.60" width="3" height="3" rx="0.8" fill="#626b75"/>
<rect x="708.70" y="669.50" width="3" height="3" rx="0.8" fill="#626b75"/>
<rect x="708.70" y="679.40" width="3" height="3" rx="0.8" fill="#626b75"/>
<rect x="708.70" y="689.30" width="3" height="3" rx="0.8" fill="#626b75"/>
<rect x="708.70" y="699.20" width="3" height="3" rx="0.8" fill="#626b75"/>
<rect x="708.70" y="709.10" width="3" height="3" rx="0.8" fill="#626b75"/>
<line x1="710.2" y1="86" x2="710.2" y2="713" stroke="#9a9a9a" stroke-width="0.8" stroke-dasharray="1 1.5"/>
<rect x="756.50" y="90.00" width="3" height="3" rx="0.8" fill="#626b75"/>
<rect x="756.50" y="100.00" width="3" height="3" rx="0.8" fill="#626b75"/>
<rect x="756.50" y="110.00" width="3" height="3" rx="0.8" fill="#626b75"/>
<rect x="756.50" y="120.00" width="3" height="3" rx="0.8" fill="#626b75"/>
<rect x="756.50" y="130.00" width="3" height="3" rx="0.8" fill="#626b75"/>
<rect x="756.50" y="140.00" width="3" height="3" rx="0.8" fill="#626b75"/>
<rect x="756.50" y="150.00" width="3" height="3" rx="0.8" fill="#626b75"/>
<rect x="756.50" y="160.00" width="3" height="3" rx="0.8" fill="#626b75"/>
<rect x="756.50" y="177.50" width="3" height="3" rx="0.8" fill="#626b75"/>
<rect x="756.50" y="187.40" width="3" height="3" rx="0.8" fill="#626b75"/>
<rect x="756.50" y="197.30" width="3" height="3" rx="0.8" fill="#626b75"/>
<rect x="756.50" y="207.20" width="3" height="3" rx="0.8" fill="#626b75"/>
<rect x="756.50" y="217.10" width="3" height="3" rx="0.8" fill="#626b75"/>
<rect x="756.50" y="227.00" width="3" height="3" rx="0.8" fill="#626b75"/>
<rect x="756.50" y="236.90" width="3" height="3" rx="0.8" fill="#626b75"/>
<rect x="756.50" y="246.80" width="3" height="3" rx="0.8" fill="#626b75"/>
<rect x="756.50" y="256.70" width="3" height="3" rx="0.8" fill="#626b75"/>
<rect x="756.50" y="266.60" width="3" height="3" rx="0.8" fill="#626b75"/>
<rect x="756.50" y="276.50" width="3" height="3" rx="0.8" fill="#626b75"/>
<rect x="756.50" y="286.40" width="3" height="3" rx="0.8" fill="#626b75"/>
<rect x="756.50" y="296.30" width="3" height="3" rx="0.8" fill="#626b75"/>
<rect x="756.50" y="306.20" width="3" height="3" rx="0.8" fill="#626b75"/>
<rect x="756.50" y="316.10" width="3" height="3" rx="0.8" fill="#626b75"/>
<rect x="756.50" y="326.00" width="3" height="3" rx="0.8" fill="#626b75"/>
<rect x="756.50" y="335.90" width="3" height="3" rx="0.8" fill="#626b75"/>
<rect x="756.50" y="345.80" width="3" height="3" rx="0.8" fill="#626b75"/>
<rect x="756.50" y="355.70" width="3" height="3" rx="0.8" fill="#626b75"/>
<rect x="756.50" y="365.60" width="3" height="3" rx="0.8" fill="#626b75"/>
<rect x="756.50" y="375.50" width="3" height="3" rx="0.8" fill="#626b75"/>
<rect x="756.50" y="385.40" width="3" height="3" rx="0.8" fill="#626b75"/>
<rect x="756.50" y="395.30" width="3" height="3" rx="0.8" fill="#626b75"/>
<rect x="756.50" y="405.20" width="3" height="3" rx="0.8" fill="#626b75"/>
<rect x="756.50" y="415.10" width="3" height="3" rx="0.8" fill="#626b75"/>
<rect x="756.50" y="425.00" width="3" height="3" rx="0.8" fill="#626b75"/>
<rect x="756.50" y="434.90" width="3" height="3" rx="0.8" fill="#626b75"/>
<rect x="756.50" y="444.80" width="3" height="3" rx="0.8" fill="#626b75"/>
<rect x="756.50" y="454.70" width="3" height="3" rx="0.8" fill="#626b75"/>
<rect x="756.50" y="464.60" width="3" height="3" rx="0.8" fill="#626b75"/>
<rect x="756.50" y="474.50" width="3" height="3" rx="0.8" fill="#626b75"/>
<rect x="756.50" y="484.40" width="3" height="3" rx="0.8" fill="#626b75"/>
<rect x="756.50" y="494.30" width="3" height="3" rx="0.8" fill="#626b75"/>
<rect x="756.50" y="504.20" width="3" height="3" rx="0.8" fill="#626b75"/>
<rect x="756.50" y="520.50" width="3" height="3" rx="0.8" fill="#626b75"/>
<rect x="756.50" y="530.30" width="3" height="3" rx="0.8" fill="#626b75"/>
<rect x="756.50" y="540.10" width="3" height="3" rx="0.8" fill="#626b75"/>
<rect x="756.50" y="549.90" width="3" height="3" rx="0.8" fill="#626b75"/>
<rect x="756.50" y="570.50" width="3" height="3" rx="0.8" fill="#626b75"/>
<rect x="756.50" y="580.40" width="3" height="3" rx="0.8" fill="#626b75"/>
<rect x="756.50" y="590.30" width="3" height="3" rx="0.8" fill="#626b75"/>
<rect x="756.50" y="600.20" width="3" height="3" rx="0.8" fill="#626b75"/>
<rect x="756.50" y="610.10" width="3" height="3" rx="0.8" fill="#626b75"/>
<rect x="756.50" y="620.00" width="3" height="3" rx="0.8" fill="#626b75"/>
<rect x="756.50" y="629.90" width="3" height="3" rx="0.8" fill="#626b75"/>
<rect x="756.50" y="639.80" width="3" height="3" rx="0.8" fill="#626b75"/>
<rect x="756.50" y="649.70" width="3" height="3" rx="0.8" fill="#626b75"/>
<rect x="756.50" y="659.60" width="3" height="3" rx="0.8" fill="#626b75"/>
<rect x="756.50" y="669.50" width="3" height="3" rx="0.8" fill="#626b75"/>
<rect x="756.50" y="679.40" width="3" height="3" rx="0.8" fill="#626b75"/>
<rect x="756.50" y="689.30" width="3" height="3" rx="0.8" fill="#626b75"/>
<rect x="756.50" y="699.20" width="3" height="3" rx="0.8" fill="#626b75"/>
<rect x="756.50" y="709.10" width="3" height="3" rx="0.8" fill="#626b75"/>
<line x1="758" y1="86" x2="758" y2="713" stroke="#9a9a9a" stroke-width="0.8" stroke-dasharray="1 1.5"/>
<rect x="635.90" y="140.00" width="3" height="3" rx="0.8" fill="#626b75"/>
<rect x="635.90" y="150.00" width="3" height="3" rx="0.8" fill="#626b75"/>
<rect x="635.90" y="160.00" width="3" height="3" rx="0.8" fill="#626b75"/>
<rect x="635.90" y="177.50" width="3" height="3" rx="0.8" fill="#626b75"/>
<rect x="635.90" y="187.40" width="3" height="3" rx="0.8" fill="#626b75"/>
<rect x="635.90" y="197.30" width="3" height="3" rx="0.8" fill="#626b75"/>
<rect x="635.90" y="207.20" width="3" height="3" rx="0.8" fill="#626b75"/>
<rect x="635.90" y="217.10" width="3" height="3" rx="0.8" fill="#626b75"/>
<rect x="635.90" y="227.00" width="3" height="3" rx="0.8" fill="#626b75"/>
<rect x="635.90" y="236.90" width="3" height="3" rx="0.8" fill="#626b75"/>
<rect x="635.90" y="246.80" width="3" height="3" rx="0.8" fill="#626b75"/>
<rect x="635.90" y="256.70" width="3" height="3" rx="0.8" fill="#626b75"/>
<rect x="635.90" y="266.60" width="3" height="3" rx="0.8" fill="#626b75"/>
<rect x="635.90" y="276.50" width="3" height="3" rx="0.8" fill="#626b75"/>
<rect x="635.90" y="286.40" width="3" height="3" rx="0.8" fill="#626b75"/>
<rect x="635.90" y="296.30" width="3" height="3" rx="0.8" fill="#626b75"/>
<rect x="635.90" y="306.20" width="3" height="3" rx="0.8" fill="#626b75"/>
<rect x="635.90" y="316.10" width="3" height="3" rx="0.8" fill="#626b75"/>
<rect x="635.90" y="326.00" width="3" height="3" rx="0.8" fill="#626b75"/>
<rect x="635.90" y="335.90" width="3" height="3" rx="0.8" fill="#626b75"/>
<rect x="635.90" y="345.80" width="3" height="3" rx="0.8" fill="#626b75"/>
<rect x="635.90" y="355.70" width="3" height="3" rx="0.8" fill="#626b75"/>
<rect x="635.90" y="365.60" width="3" height="3" rx="0.8" fill="#626b75"/>
<rect x="635.90" y="375.50" width="3" height="3" rx="0.8" fill="#626b75"/>
<rect x="635.90" y="385.40" width="3" height="3" rx="0.8" fill="#626b75"/>
<rect x="635.90" y="395.30" width="3" height="3" rx="0.8" fill="#626b75"/>
<rect x="635.90" y="405.20" width="3" height="3" rx="0.8" fill="#626b75"/>
<rect x="635.90" y="415.10" width="3" height="3" rx="0.8" fill="#626b75"/>
<rect x="635.90" y="425.00" width="3" height="3" rx="0.8" fill="#626b75"/>
<rect x="635.90" y="434.90" width="3" height="3" rx="0.8" fill="#626b75"/>
<rect x="635.90" y="444.80" width="3" height="3" rx="0.8" fill="#626b75"/>
<rect x="635.90" y="454.70" width="3" height="3" rx="0.8" fill="#626b75"/>
<rect x="635.90" y="464.60" width="3" height="3" rx="0.8" fill="#626b75"/>
<rect x="635.90" y="474.50" width="3" height="3" rx="0.8" fill="#626b75"/>
<rect x="635.90" y="484.40" width="3" height="3" rx="0.8" fill="#626b75"/>
<rect x="635.90" y="494.30" width="3" height="3" rx="0.8" fill="#626b75"/>
<rect x="635.90" y="504.20" width="3" height="3" rx="0.8" fill="#626b75"/>
<rect x="635.90" y="520.50" width="3" height="3" rx="0.8" fill="#626b75"/>
<rect x="635.90" y="530.30" width="3" height="3" rx="0.8" fill="#626b75"/>
<rect x="635.90" y="540.10" width="3" height="3" rx="0.8" fill="#626b75"/>
<rect x="635.90" y="549.90" width="3" height="3" rx="0.8" fill="#626b75"/>
<rect x="635.90" y="570.50" width="3" height="3" rx="0.8" fill="#626b75"/>
<rect x="635.90" y="580.40" width="3" height="3" rx="0.8" fill="#626b75"/>
<rect x="635.90" y="590.30" width="3" height="3" rx="0.8" fill="#626b75"/>
<rect x="635.90" y="600.20" width="3" height="3" rx="0.8" fill="#626b75"/>
<rect x="635.90" y="610.10" width="3" height="3" rx="0.8" fill="#626b75"/>
<rect x="635.90" y="620.00" width="3" height="3" rx="0.8" fill="#626b75"/>
<rect x="635.90" y="629.90" width="3" height="3" rx="0.8" fill="#626b75"/>
<rect x="635.90" y="639.80" width="3" height="3" rx="0.8" fill="#626b75"/>
<rect x="635.90" y="649.70" width="3" height="3" rx="0.8" fill="#626b75"/>
<rect x="635.90" y="659.60" width="3" height="3" rx="0.8" fill="#626b75"/>
<rect x="635.90" y="669.50" width="3" height="3" rx="0.8" fill="#626b75"/>
<rect x="635.90" y="679.40" width="3" height="3" rx="0.8" fill="#626b75"/>
<rect x="635.90" y="689.30" width="3" height="3" rx="0.8" fill="#626b75"/>
<rect x="635.90" y="699.20" width="3" height="3" rx="0.8" fill="#626b75"/>
<rect x="635.90" y="709.10" width="3" height="3" rx="0.8" fill="#626b75"/>
<line x1="637.4" y1="140" x2="637.4" y2="713" stroke="#9a9a9a" stroke-width="0.8" stroke-dasharray="1 1.5"/>
<rect x="640.10" y="140.00" width="5" height="3" rx="0.8" fill="#626b75"/>
<rect x="640.10" y="150.00" width="5" height="3" rx="0.8" fill="#626b75"/>
<rect x="640.10" y="160.00" width="5" height="3" rx="0.8" fill="#626b75"/>
<rect x="640.10" y="177.50" width="5" height="3" rx="0.8" fill="#626b75"/>
<rect x="640.10" y="187.40" width="5" height="3" rx="0.8" fill="#626b75"/>
<rect x="640.10" y="197.30" width="5" height="3" rx="0.8" fill="#626b75"/>
<rect x="640.10" y="207.20" width="5" height="3" rx="0.8" fill="#626b75"/>
<rect x="640.10" y="217.10" width="5" height="3" rx="0.8" fill="#626b75"/>
<rect x="640.10" y="227.00" width="5" height="3" rx="0.8" fill="#626b75"/>
<rect x="640.10" y="236.90" width="5" height="3" rx="0.8" fill="#626b75"/>
<rect x="640.10" y="246.80" width="5" height="3" rx="0.8" fill="#626b75"/>
<rect x="640.10" y="256.70" width="5" height="3" rx="0.8" fill="#626b75"/>
<rect x="640.10" y="266.60" width="5" height="3" rx="0.8" fill="#626b75"/>
<rect x="640.10" y="276.50" width="5" height="3" rx="0.8" fill="#626b75"/>
<rect x="640.10" y="286.40" width="5" height="3" rx="0.8" fill="#626b75"/>
<rect x="640.10" y="296.30" width="5" height="3" rx="0.8" fill="#626b75"/>
<rect x="640.10" y="306.20" width="5" height="3" rx="0.8" fill="#626b75"/>
<rect x="640.10" y="316.10" width="5" height="3" rx="0.8" fill="#626b75"/>
<rect x="640.10" y="326.00" width="5" height="3" rx="0.8" fill="#626b75"/>
<rect x="640.10" y="335.90" width="5" height="3" rx="0.8" fill="#626b75"/>
<rect x="640.10" y="345.80" width="5" height="3" rx="0.8" fill="#626b75"/>
<rect x="640.10" y="355.70" width="5" height="3" rx="0.8" fill="#626b75"/>
<rect x="640.10" y="365.60" width="5" height="3" rx="0.8" fill="#626b75"/>
<rect x="640.10" y="375.50" width="5" height="3" rx="0.8" fill="#626b75"/>
<rect x="640.10" y="385.40" width="5" height="3" rx="0.8" fill="#626b75"/>
<rect x="640.10" y="395.30" width="5" height="3" rx="0.8" fill="#626b75"/>
<rect x="640.10" y="405.20" width="5" height="3" rx="0.8" fill="#626b75"/>
<rect x="640.10" y="415.10" width="5" height="3" rx="0.8" fill="#626b75"/>
<rect x="640.10" y="425.00" width="5" height="3" rx="0.8" fill="#626b75"/>
<rect x="640.10" y="434.90" width="5" height="3" rx="0.8" fill="#626b75"/>
<rect x="640.10" y="444.80" width="5" height="3" rx="0.8" fill="#626b75"/>
<rect x="640.10" y="454.70" width="5" height="3" rx="0.8" fill="#626b75"/>
<rect x="640.10" y="464.60" width="5" height="3" rx="0.8" fill="#626b75"/>
<rect x="640.10" y="474.50" width="5" height="3" rx="0.8" fill="#626b75"/>
<rect x="640.10" y="484.40" width="5" height="3" rx="0.8" fill="#626b75"/>
<rect x="640.10" y="494.30" width="5" height="3" rx="0.8" fill="#626b75"/>
<rect x="640.10" y="504.20" width="5" height="3" rx="0.8" fill="#626b75"/>
<rect x="640.10" y="520.50" width="5" height="3" rx="0.8" fill="#626b75"/>
<rect x="640.10" y="530.30" width="5" height="3" rx="0.8" fill="#626b75"/>
<rect x="640.10" y="540.10" width="5" height="3" rx="0.8" fill="#626b75"/>
<rect x="640.10" y="549.90" width="5" height="3" rx="0.8" fill="#626b75"/>
<rect x="640.10" y="570.50" width="5" height="3" rx="0.8" fill="#626b75"/>
<rect x="640.10" y="580.40" width="5" height="3" rx="0.8" fill="#626b75"/>
<rect x="640.10" y="590.30" width="5" height="3" rx="0.8" fill="#626b75"/>
<rect x="640.10" y="600.20" width="5" height="3" rx="0.8" fill="#626b75"/>
<rect x="640.10" y="610.10" width="5" height="3" rx="0.8" fill="#626b75"/>
<rect x="640.10" y="620.00" width="5" height="3" rx="0.8" fill="#626b75"/>
<rect x="640.10" y="629.90" width="5" height="3" rx="0.8" fill="#626b75"/>
<rect x="640.10" y="639.80" width="5" height="3" rx="0.8" fill="#626b75"/>
<rect x="640.10" y="649.70" width="5" height="3" rx="0.8" fill="#626b75"/>
<rect x="640.10" y="659.60" width="5" height="3" rx="0.8" fill="#626b75"/>
<rect x="640.10" y="669.50" width="5" height="3" rx="0.8" fill="#626b75"/>
<rect x="640.10" y="679.40" width="5" height="3" rx="0.8" fill="#626b75"/>
<rect x="640.10" y="689.30" width="5" height="3" rx="0.8" fill="#626b75"/>
<rect x="640.10" y="699.20" width="5" height="3" rx="0.8" fill="#626b75"/>
<rect x="640.10" y="709.10" width="5" height="3" rx="0.8" fill="#626b75"/>
<line x1="642.6" y1="140" x2="642.6" y2="713" stroke="#9a9a9a" stroke-width="0.8" stroke-dasharray="1 1.5"/>
<rect x="642.2" y="90.5" width="3" height="3" rx="0.8" fill="#626b75"/>
<rect x="642.2" y="100.2" width="3" height="3" rx="0.8" fill="#626b75"/>
<rect x="642.2" y="110.2" width="3" height="3" rx="0.8" fill="#626b75"/>
<rect x="642.2" y="119.5" width="3" height="3" rx="0.8" fill="#626b75"/>
<rect x="642.2" y="129.8" width="3" height="3" rx="0.8" fill="#626b75"/>
<line x1="643.7" y1="86" x2="643.7" y2="140" stroke="#9a9a9a" stroke-width="0.8" stroke-dasharray="1 1.5"/>
<line x1="641" y1="140" x2="641" y2="713" stroke="#a0a0a0" stroke-width="0.6" stroke-dasharray="1 1.5"/>
<line x1="644" y1="140" x2="644" y2="713" stroke="#a0a0a0" stroke-width="0.6" stroke-dasharray="1 1.5"/>
<rect x="731.00" y="90.20" width="8" height="2.6" rx="0.8" fill="#626b75"/>
<rect x="731.00" y="100.20" width="8" height="2.6" rx="0.8" fill="#626b75"/>
<rect x="731.00" y="110.20" width="8" height="2.6" rx="0.8" fill="#626b75"/>
<rect x="731.00" y="120.20" width="8" height="2.6" rx="0.8" fill="#626b75"/>
<rect x="731.00" y="130.20" width="8" height="2.6" rx="0.8" fill="#626b75"/>
<rect x="731.00" y="140.20" width="8" height="2.6" rx="0.8" fill="#626b75"/>
<rect x="731.00" y="150.20" width="8" height="2.6" rx="0.8" fill="#626b75"/>
<rect x="731.00" y="160.20" width="8" height="2.6" rx="0.8" fill="#626b75"/>
<rect x="731.00" y="177.70" width="8" height="2.6" rx="0.8" fill="#626b75"/>
<rect x="731.00" y="187.60" width="8" height="2.6" rx="0.8" fill="#626b75"/>
<rect x="731.00" y="197.50" width="8" height="2.6" rx="0.8" fill="#626b75"/>
<rect x="731.00" y="207.40" width="8" height="2.6" rx="0.8" fill="#626b75"/>
<rect x="731.00" y="217.30" width="8" height="2.6" rx="0.8" fill="#626b75"/>
<rect x="731.00" y="227.20" width="8" height="2.6" rx="0.8" fill="#626b75"/>
<rect x="731.00" y="237.10" width="8" height="2.6" rx="0.8" fill="#626b75"/>
<rect x="731.00" y="247.00" width="8" height="2.6" rx="0.8" fill="#626b75"/>
<rect x="731.00" y="256.90" width="8" height="2.6" rx="0.8" fill="#626b75"/>
<rect x="731.00" y="266.80" width="8" height="2.6" rx="0.8" fill="#626b75"/>
<rect x="731.00" y="276.70" width="8" height="2.6" rx="0.8" fill="#626b75"/>
<rect x="731.00" y="286.60" width="8" height="2.6" rx="0.8" fill="#626b75"/>
<rect x="731.00" y="296.50" width="8" height="2.6" rx="0.8" fill="#626b75"/>
<rect x="731.00" y="306.40" width="8" height="2.6" rx="0.8" fill="#626b75"/>
<rect x="731.00" y="316.30" width="8" height="2.6" rx="0.8" fill="#626b75"/>
<rect x="731.00" y="326.20" width="8" height="2.6" rx="0.8" fill="#626b75"/>
<rect x="731.00" y="336.10" width="8" height="2.6" rx="0.8" fill="#626b75"/>
<rect x="731.00" y="346.00" width="8" height="2.6" rx="0.8" fill="#626b75"/>
<rect x="731.00" y="355.90" width="8" height="2.6" rx="0.8" fill="#626b75"/>
<rect x="731.00" y="365.80" width="8" height="2.6" rx="0.8" fill="#626b75"/>
<rect x="731.00" y="375.70" width="8" height="2.6" rx="0.8" fill="#626b75"/>
<rect x="731.00" y="385.60" width="8" height="2.6" rx="0.8" fill="#626b75"/>
<rect x="731.00" y="395.50" width="8" height="2.6" rx="0.8" fill="#626b75"/>
<rect x="731.00" y="405.40" width="8" height="2.6" rx="0.8" fill="#626b75"/>
<rect x="731.00" y="415.30" width="8" height="2.6" rx="0.8" fill="#626b75"/>
<rect x="731.00" y="425.20" width="8" height="2.6" rx="0.8" fill="#626b75"/>
<rect x="731.00" y="435.10" width="8" height="2.6" rx="0.8" fill="#626b75"/>
<rect x="731.00" y="445.00" width="8" height="2.6" rx="0.8" fill="#626b75"/>
<rect x="731.00" y="454.90" width="8" height="2.6" rx="0.8" fill="#626b75"/>
<rect x="731.00" y="464.80" width="8" height="2.6" rx="0.8" fill="#626b75"/>
<rect x="731.00" y="474.70" width="8" height="2.6" rx="0.8" fill="#626b75"/>
<rect x="731.00" y="484.60" width="8" height="2.6" rx="0.8" fill="#626b75"/>
<rect x="731.00" y="494.50" width="8" height="2.6" rx="0.8" fill="#626b75"/>
<rect x="731.00" y="504.40" width="8" height="2.6" rx="0.8" fill="#626b75"/>
<rect x="731.00" y="520.70" width="8" height="2.6" rx="0.8" fill="#626b75"/>
<rect x="731.00" y="530.50" width="8" height="2.6" rx="0.8" fill="#626b75"/>
<rect x="731.00" y="540.30" width="8" height="2.6" rx="0.8" fill="#626b75"/>
<rect x="731.00" y="550.10" width="8" height="2.6" rx="0.8" fill="#626b75"/>
<rect x="731.00" y="570.70" width="8" height="2.6" rx="0.8" fill="#626b75"/>
<rect x="731.00" y="580.60" width="8" height="2.6" rx="0.8" fill="#626b75"/>
<rect x="731.00" y="590.50" width="8" height="2.6" rx="0.8" fill="#626b75"/>
<rect x="731.00" y="600.40" width="8" height="2.6" rx="0.8" fill="#626b75"/>
<rect x="731.00" y="610.30" width="8" height="2.6" rx="0.8" fill="#626b75"/>
<rect x="731.00" y="620.20" width="8" height="2.6" rx="0.8" fill="#626b75"/>
<rect x="731.00" y="630.10" width="8" height="2.6" rx="0.8" fill="#626b75"/>
<rect x="731.00" y="640.00" width="8" height="2.6" rx="0.8" fill="#626b75"/>
<rect x="731.00" y="649.90" width="8" height="2.6" rx="0.8" fill="#626b75"/>
<rect x="731.00" y="659.80" width="8" height="2.6" rx="0.8" fill="#626b75"/>
<rect x="731.00" y="669.70" width="8" height="2.6" rx="0.8" fill="#626b75"/>
<rect x="731.00" y="679.60" width="8" height="2.6" rx="0.8" fill="#626b75"/>
<rect x="731.00" y="689.50" width="8" height="2.6" rx="0.8" fill="#626b75"/>
<rect x="731.00" y="699.40" width="8" height="2.6" rx="0.8" fill="#626b75"/>
<rect x="731.00" y="709.30" width="8" height="2.6" rx="0.8" fill="#626b75"/>
<line x1="735" y1="86" x2="735" y2="713" stroke="#9a9a9a" stroke-width="0.8" stroke-dasharray="1 1.5"/>
<line x1="731.5" y1="86" x2="731.5" y2="713" stroke="#a0a0a0" stroke-width="0.6" stroke-dasharray="1 1.5"/>
<line x1="738.5" y1="86" x2="738.5" y2="713" stroke="#a0a0a0" stroke-width="0.6" stroke-dasharray="1 1.5"/>
<rect x="356.40" y="120.75" width="3" height="2.5" rx="0.8" fill="#626b75"/>
<rect x="366.30" y="120.75" width="3" height="2.5" rx="0.8" fill="#626b75"/>
<rect x="376.20" y="120.75" width="3" height="2.5" rx="0.8" fill="#626b75"/>
<rect x="386.10" y="120.75" width="3" height="2.5" rx="0.8" fill="#626b75"/>
<rect x="396.00" y="120.75" width="3" height="2.5" rx="0.8" fill="#626b75"/>
<rect x="405.90" y="120.75" width="3" height="2.5" rx="0.8" fill="#626b75"/>
<rect x="415.80" y="120.75" width="3" height="2.5" rx="0.8" fill="#626b75"/>
<rect x="425.70" y="120.75" width="3" height="2.5" rx="0.8" fill="#626b75"/>
<rect x="435.60" y="120.75" width="3" height="2.5" rx="0.8" fill="#626b75"/>
<rect x="445.50" y="120.75" width="3" height="2.5" rx="0.8" fill="#626b75"/>
<rect x="455.40" y="120.75" width="3" height="2.5" rx="0.8" fill="#626b75"/>
<rect x="465.30" y="120.75" width="3" height="2.5" rx="0.8" fill="#626b75"/>
<rect x="475.20" y="120.75" width="3" height="2.5" rx="0.8" fill="#626b75"/>
<rect x="485.10" y="120.75" width="3" height="2.5" rx="0.8" fill="#626b75"/>
<rect x="495.00" y="120.75" width="3" height="2.5" rx="0.8" fill="#626b75"/>
<rect x="504.90" y="120.75" width="3" height="2.5" rx="0.8" fill="#626b75"/>
<rect x="514.80" y="120.75" width="3" height="2.5" rx="0.8" fill="#626b75"/>
<rect x="524.70" y="120.75" width="3" height="2.5" rx="0.8" fill="#626b75"/>
<rect x="534.60" y="120.75" width="3" height="2.5" rx="0.8" fill="#626b75"/>
<rect x="544.50" y="120.75" width="3" height="2.5" rx="0.8" fill="#626b75"/>
<rect x="554.40" y="120.75" width="3" height="2.5" rx="0.8" fill="#626b75"/>
<rect x="564.30" y="120.75" width="3" height="2.5" rx="0.8" fill="#626b75"/>
<rect x="574.20" y="120.75" width="3" height="2.5" rx="0.8" fill="#626b75"/>
<rect x="584.10" y="120.75" width="3" height="2.5" rx="0.8" fill="#626b75"/>
<line x1="352" y1="122" x2="592" y2="122" stroke="#9a9a9a" stroke-width="0.8" stroke-dasharray="1 1.5"/>
<rect x="356.40" y="96" width="3" height="8" fill="#626b75"/>
<rect x="366.30" y="96" width="3" height="8" fill="#626b75"/>
<rect x="376.20" y="96" width="3" height="8" fill="#626b75"/>
<rect x="386.10" y="96" width="3" height="8" fill="#626b75"/>
<rect x="396.00" y="96" width="3" height="8" fill="#626b75"/>
<rect x="405.90" y="96" width="3" height="8" fill="#626b75"/>
<rect x="415.80" y="96" width="3" height="8" fill="#626b75"/>
<rect x="425.70" y="96" width="3" height="8" fill="#626b75"/>
<rect x="435.60" y="96" width="3" height="8" fill="#626b75"/>
<rect x="445.50" y="96" width="3" height="8" fill="#626b75"/>
<rect x="455.40" y="96" width="3" height="8" fill="#626b75"/>
<rect x="465.30" y="96" width="3" height="8" fill="#626b75"/>
<rect x="475.20" y="96" width="3" height="8" fill="#626b75"/>
<rect x="485.10" y="96" width="3" height="8" fill="#626b75"/>
<rect x="495.00" y="96" width="3" height="8" fill="#626b75"/>
<rect x="504.90" y="96" width="3" height="8" fill="#626b75"/>
<rect x="514.80" y="96" width="3" height="8" fill="#626b75"/>
<rect x="524.70" y="96" width="3" height="8" fill="#626b75"/>
<rect x="534.60" y="96" width="3" height="8" fill="#626b75"/>
<rect x="544.50" y="96" width="3" height="8" fill="#626b75"/>
<rect x="554.40" y="96" width="3" height="8" fill="#626b75"/>
<line x1="352" y1="100" x2="562" y2="100" stroke="#9a9a9a" stroke-width="0.8" stroke-dasharray="1 1.5"/>
<line x1="352" y1="102.5" x2="562" y2="102.5" stroke="#9a9a9a" stroke-width="0.8" stroke-dasharray="1 1.5"/>
<rect x="572.5" y="96.5" width="3" height="7" fill="#626b75" transform="rotate(0 574 100)"/>
<rect x="581.5" y="96.5" width="3" height="7" fill="#626b75" transform="rotate(0 583 100)"/>
<rect x="590.5" y="96.5" width="3" height="7" fill="#626b75" transform="rotate(0 592 100)"/>
<rect x="599.5" y="97.5" width="3" height="7" fill="#626b75" transform="rotate(1.5 601 101)"/>
<rect x="609.5" y="100.5" width="3" height="7" fill="#626b75" transform="rotate(16.5 611 104)"/>
<rect x="618.5" y="104.5" width="3" height="7" fill="#626b75" transform="rotate(30.0 620 108)"/>
<rect x="626.5" y="109.5" width="3" height="7" fill="#626b75" transform="rotate(42.0 628 113)"/>
<rect x="634.5" y="115.5" width="3" height="7" fill="#626b75" transform="rotate(54.0 636 119)"/>
<rect x="639.5" y="121.5" width="3" height="7" fill="#626b75" transform="rotate(61.5 641 125)"/>
<rect x="644.5" y="127.5" width="3" height="7" fill="#626b75" transform="rotate(69.0 646 131)"/>
<rect x="648.5" y="133.5" width="3" height="7" fill="#626b75" transform="rotate(75.0 650 137)"/>
<path d="M592 122 Q617.8 122 617.8 148" fill="none" stroke="#626b75" stroke-width="2.5" stroke-dasharray="2.5 7.4"/>
<path d="M619 86 Q652 104 662 140" fill="none" stroke="#626b75" stroke-width="2.2" stroke-dasharray="2.2 7.5"/>
<path d="M619 86 Q652 104 662 140" fill="none" stroke="#9a9a9a" stroke-width="0.8" stroke-dasharray="1 2"/>
<path d="M600 108 Q640 120 650 165" fill="none" stroke="#626b75" stroke-width="2" stroke-dasharray="2 5"/>
<path d="M352 113 H596 A32 34 0 0 1 628 147 V713" fill="none" stroke="#000" stroke-width="2.3"/>
<path d="M578 86 C620 95 654.8 120 654.8 158 V713" fill="none" stroke="#000" stroke-width="2.4"/>
<path d="M562 86.5 H572" stroke="#000" stroke-width="2"/>
<line x1="654.8" y1="86" x2="654.8" y2="713" stroke="#000" stroke-width="2.3"/>
<line x1="676.8" y1="86" x2="676.8" y2="713" stroke="#000" stroke-width="2.3"/>
<line x1="699" y1="86" x2="699" y2="713" stroke="#000" stroke-width="2.3"/>
<line x1="720.9" y1="86" x2="720.9" y2="713" stroke="#000" stroke-width="2.3"/>
<line x1="747.9" y1="86" x2="747.9" y2="713" stroke="#000" stroke-width="2.3"/>
<rect x="562.30" y="96.00" width="6" height="9" fill="#828282"/>
<rect x="562.30" y="110.00" width="6" height="6" fill="#000"/>
<rect x="562.30" y="119.00" width="6" height="6" fill="#828282"/>
<rect x="615.20" y="168.00" width="6" height="6" fill="#828282"/>
<rect x="625.00" y="168.00" width="6" height="6" fill="#000"/>
<rect x="634.10" y="168.00" width="13" height="6" fill="#828282"/>
<rect x="651.80" y="168.00" width="6" height="6" fill="#000"/>
<rect x="663.00" y="168.00" width="6" height="6" fill="#828282"/>
<rect x="674.00" y="168.00" width="6" height="6" fill="#000"/>
<rect x="615.00" y="512.00" width="6" height="6" fill="#828282"/>
<rect x="625.00" y="512.00" width="6" height="6" fill="#000"/>
<rect x="634.25" y="512.00" width="12.5" height="6" fill="#828282"/>
<rect x="651.80" y="512.00" width="6" height="6" fill="#000"/>
<rect x="663.00" y="512.00" width="6" height="6" fill="#828282"/>
<rect x="674.00" y="512.00" width="6" height="6" fill="#000"/>
<rect x="684.70" y="512.00" width="6" height="6" fill="#828282"/>
<rect x="695.80" y="512.00" width="6" height="6" fill="#000"/>
<rect x="707.00" y="512.00" width="6" height="6" fill="#828282"/>
<rect x="718.00" y="512.00" width="6" height="6" fill="#000"/>
<rect x="729.20" y="512.00" width="12" height="6" fill="#828282"/>
<rect x="745.00" y="512.00" width="6" height="6" fill="#000"/>
<rect x="755.50" y="512.00" width="6" height="6" fill="#828282"/>
<rect x="615.00" y="558.40" width="6" height="6" fill="#828282"/>
<rect x="625.00" y="558.40" width="6" height="6" fill="#000"/>
<rect x="634.25" y="558.40" width="12.5" height="6" fill="#828282"/>
<rect x="651.80" y="558.40" width="6" height="6" fill="#000"/>
<rect x="663.00" y="558.40" width="6" height="6" fill="#828282"/>
<rect x="674.00" y="558.40" width="6" height="6" fill="#000"/>
<rect x="684.70" y="558.40" width="6" height="6" fill="#828282"/>
<rect x="695.80" y="558.40" width="6" height="6" fill="#000"/>
<rect x="707.00" y="558.40" width="6" height="6" fill="#828282"/>
<rect x="718.00" y="558.40" width="6" height="6" fill="#000"/>
<rect x="729.20" y="558.40" width="12" height="6" fill="#828282"/>
<rect x="745.00" y="558.40" width="6" height="6" fill="#000"/>
<rect x="755.50" y="558.40" width="6" height="6" fill="#828282"/>
<rect x="649.00" y="128.30" width="6" height="6" fill="#a8aaf8"/>
<rect x="667.50" y="128.30" width="6" height="6" fill="#a8aaf8"/>
<rect x="743.20" y="96.00" width="6" height="6" fill="#a8aaf8"/>
<path d="M670 86 L678 86 L683 97 L695 115 L695.5 146 L694 146 L691 133 L687 121 L685.5 115 L677 99 Z" fill="#0000ff"/>
<polyline points="656,86 659.5,88.6 666,95 670.7,105 675.4,112.8 679,122.4 683,131 684.6,141.8 686.5,150.4 687.2,161.2 687.6,170.5" fill="none" stroke="#00ee00" stroke-width="1" stroke-dasharray="2 2"/>
<rect x="657.00" y="86.10" width="5" height="5" fill="#00ee00"/>
<rect x="663.50" y="92.50" width="5" height="5" fill="#00ee00"/>
<rect x="668.20" y="102.50" width="5" height="5" fill="#00ee00"/>
<rect x="672.90" y="110.30" width="5" height="5" fill="#00ee00"/>
<rect x="676.50" y="119.90" width="5" height="5" fill="#00ee00"/>
<rect x="680.50" y="128.50" width="5" height="5" fill="#00ee00"/>
<rect x="682.10" y="139.30" width="5" height="5" fill="#00ee00"/>
<rect x="684.00" y="147.90" width="5" height="5" fill="#00ee00"/>
<rect x="684.70" y="158.70" width="5" height="5" fill="#00ee00"/>
<rect x="685.10" y="168.00" width="5" height="5" fill="#00ee00"/>
<polyline points="688,86 690.7,93 696.6,103.7 700,114.2 702,120" fill="none" stroke="#00ee00" stroke-width="1" stroke-dasharray="2 2"/>
<rect x="688.20" y="90.50" width="5" height="5" fill="#00ee00"/>
<rect x="694.10" y="101.20" width="5" height="5" fill="#00ee00"/>
<rect x="697.50" y="111.70" width="5" height="5" fill="#00ee00"/>
<rect x="685.40" y="85.00" width="5" height="3" fill="#00ee00"/>
<path d="M693.2 438 H705.9 V451 L703.5 448.5 H693.2 Z" fill="#0000ff"/>
<text x="707.5" y="452.5" font-family="Liberation Sans" font-size="10.2" fill="#1a1aff" letter-spacing="0.3">PC_1</text>
</g></svg>
<div class="t" style="left:352.5px;top:747.60px;font-size:12px;color:#333;letter-spacing:-0.170px;">Ground Level View</div>
<div class="b" style="left:460.4px;top:752px;width:133px;height:4px;background:#e6e6e6;border:1px solid #d6d6d6;border-radius:2px"></div>
<div class="b" style="left:584.6px;top:744.4px;width:8.9px;height:19.3px;background:#0f6fdc;border-radius:0.5px"></div>
<div class="t" style="left:603.9px;top:747.60px;font-size:12px;color:#333;letter-spacing:-0.061px;">Bird Eye View</div>
<div class="inp" style="left:687.6px;top:745.7px;width:37.69999999999993px;height:17.799999999999955px;font-size:11.2px;line-height:14.799999999999955px;text-align:center;letter-spacing:-0.2px;">0</div>
<div class="btn" style="left:736.4px;top:745.3px;width:67.0px;height:19.0px;font-size:12px;line-height:18.2px;letter-spacing:-0.350px;">Reset</div>
<div class="t" style="left:360.5px;top:800.20px;font-size:12px;color:#333;letter-spacing:0.057px;">S&lt;-W&lt;-N</div>
<div class="b" style="left:430px;top:805px;width:170px;height:4px;background:#e6e6e6;border:1px solid #d6d6d6;border-radius:2px"></div>
<div class="b" style="left:429.8px;top:797px;width:8.8px;height:19px;background:#0f6fdc;border-radius:0.5px"></div>
<div class="t" style="left:618.4px;top:800.20px;font-size:12px;color:#333;letter-spacing:0.231px;">N-&gt;E-&gt;S</div>
<div class="inp" style="left:687.6px;top:798.5px;width:37.69999999999993px;height:17.799999999999955px;font-size:11.2px;line-height:14.799999999999955px;text-align:center;letter-spacing:-0.2px;">-180</div>
<div class="btn" style="left:736.4px;top:798.5px;width:67.0px;height:18.700000000000045px;font-size:12px;line-height:17.9px;letter-spacing:-0.350px;">Reset</div>
<div class="t" style="left:847.3px;top:724.00px;font-size:12px;color:#333;transform:scaleX(0.9454);transform-origin:0 50%;">East</div>
<div class="inp" style="left:913px;top:723px;width:132.20000000000005px;height:17.799999999999955px;font-size:11.2px;line-height:14.799999999999955px;text-align:left;letter-spacing:-0.2px;padding-left:2px;">97</div>
<div class="t" style="left:844.2px;top:751.60px;font-size:12px;color:#333;transform:scaleX(0.9372);transform-origin:0 50%;">North</div>
<div class="inp" style="left:913px;top:750.6px;width:132.20000000000005px;height:17.399999999999977px;font-size:11.2px;line-height:14.399999999999977px;text-align:left;letter-spacing:-0.2px;padding-left:2px;">271</div>
<div class="t" style="left:815.4px;top:779.00px;font-size:12px;color:#333;letter-spacing:-0.123px;">Up(Zoom Level)</div>
<div class="inp" style="left:913px;top:778px;width:132.20000000000005px;height:17.399999999999977px;font-size:11.2px;line-height:14.399999999999977px;text-align:left;letter-spacing:-0.2px;padding-left:2px;">-153</div>
<div class="btn" style="left:838.5px;top:813.2px;width:183.20000000000005px;height:19.0px;font-size:12px;line-height:18.2px;letter-spacing:-0.169px;">Reset View</div>
<div class="t" style="left:757.7px;top:852.80px;font-size:11.5px;color:#333;letter-spacing:0.072px;">range x = [27, 167]</div>
<div class="b" style="left:865px;top:851px;width:1px;height:18.5px;background:#b8b8b8"></div>
<div class="t" style="left:877.5px;top:852.80px;font-size:11.5px;color:#333;letter-spacing:0.019px;">range y = [207, 334]</div>
<div class="b" style="left:991px;top:851px;width:1px;height:18.5px;background:#b8b8b8"></div>
<div class="t" style="left:1003px;top:852.80px;font-size:11.5px;color:#333;transform:scaleX(0.9507);transform-origin:0 50%;">-153,0</div>
<div class="b" style="left:1044px;top:851px;width:1px;height:18.5px;background:#b8b8b8"></div>
<div class="b" style="left:1051.5px;top:73.3px;width:539px;height:795.2px;background:#f9f9f9;border:1px solid #e3e3e3"></div>
<div class="b" style="left:1117px;top:57.7px;width:110.5px;height:16px;background:#f0f0f0;border:1px solid #e3e3e3;border-bottom:none"></div>
<div class="b" style="left:1227.5px;top:57.7px;width:109.5px;height:16px;background:#f0f0f0;border:1px solid #e3e3e3;border-bottom:none"></div>
<div class="b" style="left:1337px;top:57.7px;width:111.5px;height:16px;background:#f0f0f0;border:1px solid #e3e3e3;border-bottom:none"></div>
<div class="b" style="left:1051.5px;top:55.6px;width:65.5px;height:18.7px;background:#f9f9f9;border:1px solid #e3e3e3;border-bottom:none"></div>
<div class="t" style="left:1062px;top:56.60px;font-size:11.5px;color:#333;letter-spacing:-0.133px;">Property</div>
<div class="t" style="left:1127.5px;top:58.00px;font-size:11.5px;color:#333;letter-spacing:-0.005px;">Simulation Status</div>
<div class="t" style="left:1240px;top:58.00px;font-size:11.5px;color:#333;letter-spacing:0.028px;">Batch Simulation</div>
<div class="t" style="left:1349.5px;top:58.00px;font-size:11.5px;color:#333;letter-spacing:0.060px;">Simulation Result</div>
<div class="b" style="left:1061px;top:83px;width:520px;height:775px;background:#fff;border:1px solid #8b9097"></div>
<div class="b" style="left:1295px;top:84px;width:1px;height:21px;background:#e5e5e5"></div>
<div class="b" style="left:1387px;top:84px;width:1px;height:21px;background:#e5e5e5"></div>
<div class="b" style="left:1580px;top:84px;width:1px;height:21px;background:#e5e5e5"></div>
<div class="t" style="left:1066px;top:87.00px;font-size:11px;color:#1a1a1a;letter-spacing:0.016px;">Properties</div>
<div class="t" style="left:1299px;top:87.00px;font-size:11px;color:#1a1a1a;letter-spacing:-0.071px;">Type</div>
<div class="t" style="left:1391px;top:87.00px;font-size:11px;color:#1a1a1a;letter-spacing:-0.056px;">Value</div>
<svg class="a" style="left:1065.8px;top:108.8px" width="10" height="8" viewBox="0 0 10 8"><path d="M1.5 2 L5 5.5 L8.5 2" fill="none" stroke="#2a2a2a" stroke-width="1.3"/></svg>
<div class="t" style="left:1083.3px;top:105.80px;font-size:11px;color:#1a1a1a;letter-spacing:-0.023px;">Private</div>
<div class="t" style="left:1101.85px;top:121.46px;font-size:11px;color:#1a1a1a;letter-spacing:-0.005px;">entityRef</div>
<div class="t" style="left:1298.5px;top:121.46px;font-size:11px;color:#1a1a1a;letter-spacing:0.090px;">string</div>
<div class="t" style="left:1391px;top:121.46px;font-size:11px;color:#1a1a1a;transform:scaleX(0.9447);transform-origin:0 50%;">NPC_1</div>
<svg class="a" style="left:1084.35px;top:140.12px" width="10" height="8" viewBox="0 0 10 8"><path d="M1.5 2 L5 5.5 L8.5 2" fill="none" stroke="#2a2a2a" stroke-width="1.3"/></svg>
<div class="t" style="left:1101.85px;top:137.12px;font-size:11px;color:#1a1a1a;letter-spacing:0.014px;">LongitudinalAction</div>
<svg class="a" style="left:1102.8999999999999px;top:155.78px" width="10" height="8" viewBox="0 0 10 8"><path d="M1.5 2 L5 5.5 L8.5 2" fill="none" stroke="#2a2a2a" stroke-width="1.3"/></svg>
<div class="t" style="left:1120.3999999999999px;top:152.78px;font-size:11px;color:#1a1a1a;letter-spacing:-0.040px;">SpeedAction</div>
<svg class="a" style="left:1121.45px;top:171.44px" width="10" height="8" viewBox="0 0 10 8"><path d="M1.5 2 L5 5.5 L8.5 2" fill="none" stroke="#2a2a2a" stroke-width="1.3"/></svg>
<div class="t" style="left:1138.95px;top:168.44px;font-size:11px;color:#1a1a1a;letter-spacing:-0.034px;">SpeedActionTarget</div>
<svg class="a" style="left:1140.0px;top:187.1px" width="10" height="8" viewBox="0 0 10 8"><path d="M1.5 2 L5 5.5 L8.5 2" fill="none" stroke="#2a2a2a" stroke-width="1.3"/></svg>
<div class="t" style="left:1157.5px;top:184.10px;font-size:11px;color:#1a1a1a;letter-spacing:-0.017px;">AbsoluteTargetSpeed</div>
<div class="t" style="left:1176.05px;top:199.76px;font-size:11px;color:#1a1a1a;letter-spacing:0.105px;">value</div>
<div class="t" style="left:1298.5px;top:199.76px;font-size:11px;color:#1a1a1a;letter-spacing:0.110px;">double</div>
<div class="t" style="left:1391px;top:199.76px;font-size:11px;color:#1a1a1a;letter-spacing:0.117px;">13.88888889</div>
<div class="t" style="left:1176.05px;top:215.42px;font-size:11px;color:#1a1a1a;letter-spacing:0.104px;">type</div>
<div class="t" style="left:1298.5px;top:215.42px;font-size:11px;color:#1a1a1a;letter-spacing:-0.030px;">VelocityType</div>
<div class="t" style="left:1176.05px;top:231.08px;font-size:11px;color:#1a1a1a;letter-spacing:0.113px;">range</div>
<div class="t" style="left:1298.5px;top:231.08px;font-size:11px;color:#1a1a1a;letter-spacing:0.110px;">double</div>
<svg class="a" style="left:1121.45px;top:249.74px" width="10" height="8" viewBox="0 0 10 8"><path d="M1.5 2 L5 5.5 L8.5 2" fill="none" stroke="#2a2a2a" stroke-width="1.3"/></svg>
<div class="t" style="left:1138.95px;top:246.74px;font-size:11px;color:#1a1a1a;letter-spacing:0.014px;">TransitionDynamics</div>
<div class="t" style="left:1157.5px;top:262.40px;font-size:11px;color:#1a1a1a;letter-spacing:0.062px;">dynamicsDimension</div>
<div class="t" style="left:1298.5px;top:262.40px;font-size:11px;color:#1a1a1a;letter-spacing:-0.011px;">DynamicsDime...</div>
<div class="t" style="left:1391px;top:262.40px;font-size:11px;color:#1a1a1a;letter-spacing:0.104px;">time</div>
<div class="t" style="left:1157.5px;top:278.06px;font-size:11px;color:#1a1a1a;letter-spacing:0.056px;">dynamicsShape</div>
<div class="t" style="left:1298.5px;top:278.06px;font-size:11px;color:#1a1a1a;letter-spacing:-0.012px;">DynamicsShape</div>
<div class="t" style="left:1391px;top:278.06px;font-size:11px;color:#1a1a1a;letter-spacing:0.104px;">step</div>
<div class="t" style="left:1157.5px;top:293.72px;font-size:11px;color:#1a1a1a;letter-spacing:0.105px;">value</div>
<div class="t" style="left:1298.5px;top:293.72px;font-size:11px;color:#1a1a1a;letter-spacing:0.110px;">double</div>
<div class="t" style="left:1391px;top:293.72px;font-size:11px;color:#1a1a1a;letter-spacing:0.122px;">0</div>
<div class="t" style="left:1157.5px;top:309.38px;font-size:11px;color:#1a1a1a;letter-spacing:0.027px;">followingMode</div>
<div class="t" style="left:1298.5px;top:309.38px;font-size:11px;color:#1a1a1a;letter-spacing:-0.027px;">FollowingMode</div>
<svg class="a" style="left:1084.35px;top:328.04px" width="10" height="8" viewBox="0 0 10 8"><path d="M1.5 2 L5 5.5 L8.5 2" fill="none" stroke="#2a2a2a" stroke-width="1.3"/></svg>
<div class="t" style="left:1101.85px;top:325.04px;font-size:11px;color:#1a1a1a;letter-spacing:-0.014px;">TeleportAction</div>
<svg class="a" style="left:1102.8999999999999px;top:343.7px" width="10" height="8" viewBox="0 0 10 8"><path d="M1.5 2 L5 5.5 L8.5 2" fill="none" stroke="#2a2a2a" stroke-width="1.3"/></svg>
<div class="t" style="left:1120.3999999999999px;top:340.70px;font-size:11px;color:#1a1a1a;letter-spacing:-0.030px;">LinkPosition</div>
<div class="t" style="left:1138.95px;top:356.36px;font-size:11px;color:#1a1a1a;letter-spacing:0.086px;">id</div>
<div class="t" style="left:1298.5px;top:356.36px;font-size:11px;color:#1a1a1a;letter-spacing:0.090px;">string</div>
<div class="t" style="left:1391px;top:356.36px;font-size:11px;color:#1a1a1a;letter-spacing:0.013px;">_3_0_R1_</div>
<div class="t" style="left:1138.95px;top:372.02px;font-size:11px;color:#1a1a1a;letter-spacing:0.105px;">index</div>
<div class="t" style="left:1298.5px;top:372.02px;font-size:11px;color:#1a1a1a;letter-spacing:0.077px;">int</div>
<div class="t" style="left:1391px;top:372.02px;font-size:11px;color:#1a1a1a;letter-spacing:0.122px;">29</div>
<!--MENU-->
<div class="b" style="left:698px;top:120px;width:171px;height:84.5px;background:#a5a5a5;filter:blur(0.4px)"></div>
<div class="b" style="left:695px;top:117px;width:172px;height:85.5px;background:#f0f0f0;border:2px solid #f9f9f9"></div>
<div class="b" style="left:721.5px;top:119px;width:1.2px;height:82px;background:#fbfbfb"></div>
<div class="b" style="left:698px;top:140.3px;width:166.4px;height:19.4px;background:#91c9f7"></div>
<div class="t" style="left:727.6px;top:123.50px;font-size:11.2px;color:#1a1a1a;letter-spacing:-0.036px;">Set Start Location</div>
<div class="t" style="left:727.6px;top:143.70px;font-size:11.2px;color:#1a1a1a;letter-spacing:-0.057px;">Add Waypoint</div>
<div class="t" style="left:727.6px;top:164.00px;font-size:11.2px;color:#1a1a1a;letter-spacing:-0.033px;">Delete Waypoint</div>
<div class="t" style="left:727.6px;top:184.00px;font-size:11.2px;color:#1a1a1a;letter-spacing:-0.028px;">Add Scenario Objects</div>
<svg class="a" style="left:849px;top:186px" width="6" height="9" viewBox="0 0 6 9"><path d="M1 1 L5 4.5 L1 8 Z" fill="#1a1a1a"/></svg>
</body></html>
